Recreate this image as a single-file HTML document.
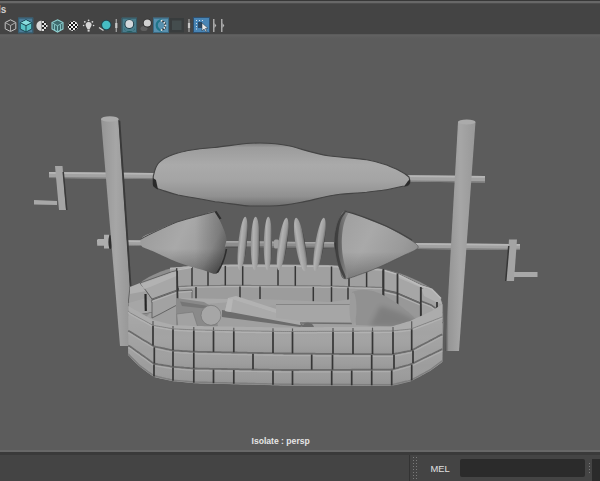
<!DOCTYPE html>
<html><head><meta charset="utf-8">
<style>
html,body{margin:0;padding:0;width:600px;height:481px;overflow:hidden;background:#5c5c5c;font-family:"Liberation Sans",sans-serif;}
#top{position:absolute;left:0;top:0;width:600px;height:34px;background:#444;}
#top .l1{position:absolute;left:0;top:0;width:600px;height:1px;background:#383838;}
#top .l2{position:absolute;left:0;top:1px;width:600px;height:2px;background:#686868;}
#top .l3{position:absolute;left:0;top:3px;width:600px;height:1px;background:#4e4e4e;}
#vp{position:absolute;left:0;top:34px;width:600px;height:416px;background:linear-gradient(#545454 0px,#626262 1px,#5e5e5e 3px,#5c5c5c 5px);}
#bot{position:absolute;left:0;top:450px;width:600px;height:31px;background:#444;}
#bot .l1{position:absolute;left:0;top:0;width:600px;height:2px;background:#686868;}
#bot .l2{position:absolute;left:0;top:2px;width:600px;height:3px;background:#3a3a3a;}
.txt{position:absolute;color:#e6e6e6;white-space:nowrap;}
</style></head><body>
<div id="top"><div class="l1"></div><div class="l2"></div><div class="l3"></div>
<svg width="240" height="34" viewBox="0 0 240 34" style="position:absolute;left:0;top:0">
<!-- icon1 wire cube -->
<g fill="none" stroke="#c4c4c4" stroke-width="1">
<path d="M10.5,19.8 L15.8,22.5 L15.8,28.8 L10.5,31.5 L5.2,28.8 L5.2,22.5 Z"/>
<path d="M10.5,25.5 L10.5,31 M10.5,25.5 L6,23 M10.5,25.5 L15,23" stroke="#aaaaaa"/>
</g>
<!-- icon2 active -->
<rect x="18.2" y="17.6" width="15" height="15.6" fill="#4b7c98"/>
<rect x="18.7" y="18.1" width="14" height="14.6" fill="none" stroke="#34596c" stroke-width="1"/>
<path d="M26,19.7 L31.8,22.7 L31.8,29 L26,32 L20.2,29 L20.2,22.7 Z" fill="#5ac3c6" stroke="#1b4652" stroke-width="1"/>
<path d="M20.5,22.9 L26,25.6 L31.5,22.9 L26,20.2 Z" fill="#8adede"/>
<path d="M26,25.6 L26,31.8 M26,25.6 L20.5,22.9 M26,25.6 L31.5,22.9" stroke="#1b4652" stroke-width="1" fill="none"/>
<!-- icon3 half checker sphere -->
<circle cx="41.6" cy="25.8" r="5.3" fill="#222"/>
<path d="M41.6,20.5 A5.3,5.3 0 0 0 41.6,31.1 Z" fill="#d8d8d8"/>
<g fill="#e0e0e0"><rect x="42" y="21" width="2" height="2"/><rect x="44" y="23" width="2" height="2"/><rect x="42" y="25" width="2" height="2"/><rect x="44" y="27" width="2" height="2"/><rect x="42" y="29" width="2" height="2"/><rect x="46" y="25" width="1.5" height="2"/></g>
<!-- icon4 teal wire cube -->
<path d="M57.5,19.8 L63,22.6 L63,29 L57.5,32 L52,29 L52,22.6 Z" fill="#3d6b6e" stroke="#90d2d2" stroke-width="1.1"/>
<path d="M57.5,25.8 L57.5,31.5 M57.5,25.8 L52.5,23 M57.5,25.8 L62.5,23 M54.5,24.5 L54.5,30 M60.5,24.5 L60.5,30" stroke="#8ccccc" stroke-width="0.9" fill="none"/>
<!-- icon5 checker circle -->
<clipPath id="cc5"><circle cx="73" cy="26" r="5.1"/></clipPath>
<g clip-path="url(#cc5)"><rect x="67" y="20" width="12" height="12" fill="#eee"/>
<g fill="#111"><rect x="67" y="20" width="2" height="2"/><rect x="71" y="20" width="2" height="2"/><rect x="75" y="20" width="2" height="2"/><rect x="69" y="22" width="2" height="2"/><rect x="73" y="22" width="2" height="2"/><rect x="77" y="22" width="2" height="2"/><rect x="67" y="24" width="2" height="2"/><rect x="71" y="24" width="2" height="2"/><rect x="75" y="24" width="2" height="2"/><rect x="69" y="26" width="2" height="2"/><rect x="73" y="26" width="2" height="2"/><rect x="77" y="26" width="2" height="2"/><rect x="67" y="28" width="2" height="2"/><rect x="71" y="28" width="2" height="2"/><rect x="75" y="28" width="2" height="2"/><rect x="69" y="30" width="2" height="2"/><rect x="73" y="30" width="2" height="2"/><rect x="77" y="30" width="2" height="2"/></g></g>
<!-- icon6 bulb -->
<g fill="#d6d6d6">
<path d="M88.6,22 C91,22 92,24 91.5,25.5 C91,27 90,28 89.6,29.5 L87.6,29.5 C87.2,28 86,27 85.7,25.5 C85.3,24 86.3,22 88.6,22 Z"/>
<rect x="87.6" y="30" width="2" height="1.6"/>
<circle cx="88.6" cy="20.3" r="0.9"/><circle cx="84.8" cy="21.8" r="0.9"/><circle cx="92.4" cy="21.8" r="0.9"/><circle cx="83.6" cy="25.5" r="0.8"/><circle cx="93.6" cy="25.5" r="0.8"/>
</g>
<!-- icon7 teal sphere -->
<circle cx="106.3" cy="25" r="5.2" fill="#1d4550"/>
<circle cx="106.3" cy="25" r="4.2" fill="#46bcc4"/>
<path d="M99,27.5 L103.5,30.5" stroke="#d0d0d0" stroke-width="1.4"/>
<!-- separator -->
<rect x="115.6" y="19" width="1.4" height="13" fill="#9a9a9a"/>
<rect x="115.2" y="23" width="2.2" height="5" fill="#c8c8c8"/>
<!-- icon9 active -->
<rect x="121.7" y="17.7" width="15.3" height="15.3" fill="#4a7d8c"/>
<rect x="122.2" y="18.2" width="14.3" height="14.3" fill="none" stroke="#355a66" stroke-width="1"/>
<path d="M124,28 A5.5,4 0 0 0 135,28 L133,31 L126,31 Z" fill="#1e5c5e"/>
<circle cx="129.3" cy="24.2" r="4.8" fill="#1f3a44"/>
<circle cx="129.3" cy="24" r="3.9" fill="#d4d8dc"/>
<!-- icon10 sphere with shadow -->
<ellipse cx="144" cy="28.5" rx="3.5" ry="2.6" fill="#5e5e5e"/>
<circle cx="147.3" cy="23.2" r="4.4" fill="#2c2c2c"/>
<circle cx="147.3" cy="23" r="3.6" fill="#d0d0d0"/>
<!-- icon11 active -->
<rect x="153" y="17.7" width="16" height="15.3" fill="#5890ae"/>
<rect x="153.5" y="18.2" width="15" height="14.3" fill="none" stroke="#3a6a84" stroke-width="1"/>
<path d="M162,20 A5.3,5.3 0 0 0 162,30.6" fill="none" stroke="#1f7488" stroke-width="2.2"/>
<path d="M161.5,20.6 L165,23 L165,28 L161.5,30.2" fill="none" stroke="#1a2a34" stroke-width="1.6"/>
<g fill="#e6e6e6"><circle cx="161.6" cy="20.8" r="1"/><circle cx="164.3" cy="22.7" r="1"/><circle cx="165.3" cy="25.4" r="1"/><circle cx="164.3" cy="28.1" r="1"/><circle cx="161.6" cy="30" r="1"/></g>
<!-- icon12 dark square -->
<rect x="169.5" y="18" width="14.5" height="14.5" fill="#383c3d"/>
<rect x="172" y="20.5" width="9.5" height="9.5" fill="#444d4e"/>
<!-- separator -->
<rect x="188.3" y="19" width="1.4" height="13" fill="#9a9a9a"/>
<rect x="187.9" y="23" width="2.2" height="5" fill="#c8c8c8"/>
<!-- icon14 active -->
<rect x="193" y="17" width="17" height="16" fill="#4884b4"/>
<rect x="193.5" y="17.5" width="16" height="15" fill="none" stroke="#2e5070" stroke-width="1"/>
<g fill="#d6e0ea"><rect x="196" y="20" width="1" height="1"/><rect x="199" y="20" width="1" height="1"/><rect x="202" y="20" width="1" height="1"/><rect x="196" y="23" width="1" height="1"/><rect x="196" y="26" width="1" height="1"/><rect x="196" y="28.5" width="1" height="1"/></g>
<rect x="198" y="22" width="4" height="6" fill="#2a4660"/>
<path d="M202,23 L202,31 L204,29 L206,32 L207,31.4 L205.3,28.5 L208,28.3 Z" fill="#e8e8e8" stroke="#20303c" stroke-width="0.5"/>
<!-- arrows -->
<rect x="213" y="19" width="1.5" height="13" fill="#a8a8a8"/>
<path d="M214.5,23 L216.3,25.5 L214.5,28 Z" fill="#b4b4b4"/>
<rect x="221" y="19" width="1.5" height="13" fill="#a8a8a8"/>
<path d="M222.5,23 L224.3,25.5 L222.5,28 Z" fill="#b4b4b4"/>
</svg>

<div class="txt" style="left:-2px;top:3.5px;font-size:10px;font-weight:bold;color:#d0d0d0;">ls</div>
</div>
<div id="vp"></div>
<svg width="600" height="481" viewBox="0 0 600 481" style="position:absolute;left:0;top:0;filter:blur(0.3px)">
<defs>
<linearGradient id="gSaus" gradientUnits="userSpaceOnUse" x1="0" y1="143" x2="0" y2="206">
<stop offset="0" stop-color="#7c7c7c"/><stop offset="0.07" stop-color="#9c9c9c"/><stop offset="0.35" stop-color="#aaaaaa"/><stop offset="0.6" stop-color="#a4a4a4"/><stop offset="0.85" stop-color="#909090"/><stop offset="1" stop-color="#6e6e6e"/>
</linearGradient>
<linearGradient id="gPostL" x1="0" y1="0" x2="1" y2="0">
<stop offset="0" stop-color="#959595"/><stop offset="0.45" stop-color="#a6a6a6"/><stop offset="0.85" stop-color="#989898"/><stop offset="1" stop-color="#6a6a6a"/>
</linearGradient>
<linearGradient id="gPostR" x1="0" y1="0" x2="1" y2="0">
<stop offset="0" stop-color="#4a4a4a"/><stop offset="0.12" stop-color="#969696"/><stop offset="0.5" stop-color="#a6a6a6"/><stop offset="1" stop-color="#989898"/>
</linearGradient>
<linearGradient id="gConeL" gradientUnits="userSpaceOnUse" x1="141" y1="220" x2="226" y2="262">
<stop offset="0" stop-color="#9a9a9a"/><stop offset="0.45" stop-color="#a9a9a9"/><stop offset="0.8" stop-color="#9a9a9a"/><stop offset="1" stop-color="#747474"/>
</linearGradient>
<linearGradient id="gConeR" gradientUnits="userSpaceOnUse" x1="340" y1="225" x2="418" y2="265">
<stop offset="0" stop-color="#a0a0a0"/><stop offset="0.35" stop-color="#a9a9a9"/><stop offset="0.75" stop-color="#9a9a9a"/><stop offset="1" stop-color="#8a8a8a"/>
</linearGradient>
<linearGradient id="gShadeV" x1="0" y1="0" x2="0" y2="1">
<stop offset="0" stop-color="#000" stop-opacity="0"/><stop offset="0.6" stop-color="#000" stop-opacity="0"/><stop offset="1" stop-color="#000" stop-opacity="0.28"/>
</linearGradient>
<linearGradient id="gDisc" x1="0" y1="0" x2="1" y2="0">
<stop offset="0" stop-color="#909090"/><stop offset="0.3" stop-color="#b2b2b2"/><stop offset="0.7" stop-color="#9c9c9c"/><stop offset="0.88" stop-color="#7a7a7a"/><stop offset="1" stop-color="#3c3c3c"/>
</linearGradient>
<linearGradient id="gShadeR" gradientUnits="userSpaceOnUse" x1="195" y1="0" x2="226" y2="0"><stop offset="0" stop-color="#000" stop-opacity="0"/><stop offset="1" stop-color="#000" stop-opacity="0.25"/></linearGradient>
<linearGradient id="gEndR" gradientUnits="userSpaceOnUse" x1="335" y1="0" x2="349" y2="0"><stop offset="0" stop-color="#505050"/><stop offset="1" stop-color="#8e8e8e"/></linearGradient>
<linearGradient id="gRow" x1="0" y1="0" x2="0" y2="1"><stop offset="0" stop-color="#fff" stop-opacity="0.07"/><stop offset="0.5" stop-color="#fff" stop-opacity="0"/><stop offset="1" stop-color="#000" stop-opacity="0.07"/></linearGradient>
<filter id="blur1" x="-20%" y="-20%" width="140%" height="140%"><feGaussianBlur stdDeviation="1.2"/></filter>
<filter id="blur2" x="-20%" y="-20%" width="140%" height="140%"><feGaussianBlur stdDeviation="2.5"/></filter>
</defs>

<!-- rods -->
<polygon points="49,172 485,176 485,182.5 49,178" fill="#a2a2a2"/>
<polygon points="49,172 485,176 485,177.8 49,173.8" fill="#b6b6b6"/>
<polygon points="49,177 485,181.3 485,182.5 49,178" fill="#7e7e7e"/>
<polygon points="97,240 520,244 520,250 97,245.5" fill="#a2a2a2"/>
<polygon points="97,240 520,244 520,245.8 97,241.8" fill="#b6b6b6"/>
<polygon points="97,244.5 520,248.8 520,250 97,245.5" fill="#7e7e7e"/>
<!-- left nut -->
<polygon points="97.5,239 104,239 104,234.8 109,234.8 109,248.5 104,248.5 104,245.5 97.5,245.5" fill="#adadad"/>
<ellipse cx="110.3" cy="242" rx="1.9" ry="7" fill="#2e2e2e"/>

<!-- posts -->
<polygon points="101,119 118.5,119 134,346 120,346" fill="url(#gPostL)"/>
<polygon points="118.3,120 120.3,121 135.5,346 133.8,346" fill="#3a3a3a"/>
<ellipse cx="109.8" cy="119" rx="8.8" ry="2.8" fill="#ababab"/>
<polygon points="458,122 475.5,122 459,351 445,351" fill="url(#gPostR)"/>
<ellipse cx="466.7" cy="122" rx="8.8" ry="2.6" fill="#ababab"/>

<!-- cranks -->
<polygon points="55,166 62.5,166 66,210 59,210" fill="#a4a4a4"/>
<polygon points="62.5,172 64,172 67.5,210 66,210" fill="#3a3a3a"/>
<polygon points="34,200 57,201 57,205 34,204.5" fill="#a8a8a8"/>
<polygon points="509,239.5 517,239.5 514,281 506,281" fill="#a4a4a4"/>
<polygon points="508,246 509.5,246 506.5,281 505,281" fill="#363636"/>
<polygon points="514,272 537.5,272 537.5,277 514,277" fill="#a8a8a8"/>

<!-- sausage -->
<path id="saus" d="M153,180 C153,176 155,166 160,161.7 C164,158 167,157 170,155.8 C176,153 181,152 186.7,150.8 C200,148.5 208,148 215,147.5 C228,146 240,144 250,143.3 C265,142.5 278,143.5 290,146 C302,149 315,154 330,156 L340,157 C350,158 358,158.5 366.7,159.7 C375,161 381,163 386.7,165 C393,167.5 397,169 400,171 C404,173 407,175 409,177 L410,181 C410,184 409,185.5 406,186 L402.7,186.3 C396,187.5 392,189 386.7,189.7 C380,190.5 373,191.5 366.7,192.3 C360,193 350,193.5 340,194.3 C325,196 310,201 300,202.5 C288,205 280,206 270,206 L250,206 C240,205.5 228,203 215,201.7 C208,200.5 200,199 195,198 C188,197 183,196 178,195 C170,193 165,191 161.7,190 C157,189 154,187 153,184 Z" fill="url(#gSaus)" stroke="#444" stroke-width="1.1"/>
<path d="M153,178 L153,186 C155,188 157,189 158,189.5 L156,180 Z" fill="#2a2a2a"/>
<path d="M410,179 L410,183 C409,185.5 407,186 404,186.5 L408,181 Z" fill="#2a2a2a"/>

<g id="ring">
<path d="M128.2,303 C129,296 131,291 131,291 C140,281 155,272 175,267.6 C200,265 220,264 260,264 L329,265 C350,266 370,267 383,269 C395,271 415,278 431.7,288.4 C437,292 441,297 443,305 L443.5,321 L442.3,362 C438,366 428,372 415.7,378 C405,382 390,386 370,386 L285,385.5 L200,383.5 C180,382 165,380 154,377 C145,371 136,364 128.2,355 Z" fill="#8e8e8e"/>
<polygon points="145,318 165,298 200,294 330,300 383,298 410,305 430,322 420,332 160,332" fill="#a0a0a0"/>
<polygon points="170.0,267.8 172.0,267.6 174.0,267.4 176.0,267.3 178.0,267.1 180.0,266.9 182.0,266.7 184.0,266.5 186.0,266.4 188.0,266.2 190.0,266.0 192.0,265.9 194.0,265.9 196.0,265.8 198.0,265.8 200.0,265.7 202.0,265.6 204.0,265.6 206.0,265.5 208.0,265.5 210.0,265.4 212.0,265.3 214.0,265.3 216.0,265.2 218.0,265.2 220.0,265.1 222.0,265.0 224.0,265.0 226.0,264.9 228.0,264.9 230.0,264.8 232.0,264.8 234.0,264.8 236.0,264.8 238.0,264.8 240.0,264.9 242.0,264.9 244.0,264.9 246.0,264.9 248.0,264.9 250.0,264.9 252.0,264.9 254.0,264.9 256.0,264.9 258.0,264.9 260.0,265.0 262.0,265.0 264.0,265.0 266.0,265.0 268.0,265.0 270.0,265.0 272.0,265.0 274.0,265.0 276.0,265.0 278.0,265.0 280.0,265.1 282.0,265.1 284.0,265.1 286.0,265.1 288.0,265.1 290.0,265.1 292.0,265.1 294.0,265.1 296.0,265.1 298.0,265.1 300.0,265.2 302.0,265.2 304.0,265.2 306.0,265.2 308.0,265.2 310.0,265.2 312.0,265.2 314.0,265.2 316.0,265.2 318.0,265.2 320.0,265.3 322.0,265.3 324.0,265.3 326.0,265.3 328.0,265.3 330.0,265.4 332.0,265.5 334.0,265.7 336.0,265.8 338.0,265.9 340.0,266.1 342.0,266.2 344.0,266.4 346.0,266.5 348.0,266.7 350.0,266.8 352.0,267.0 354.0,267.1 356.0,267.2 358.0,267.4 360.0,267.5 362.0,267.7 364.0,267.8 366.0,268.0 368.0,268.1 370.0,268.3 372.0,268.4 374.0,268.6 376.0,268.7 378.0,268.8 380.0,269.0 382.0,269.1 383.0,269.2 383.0,287.5 382.0,287.5 380.0,287.4 378.0,287.4 376.0,287.3 374.0,287.2 372.0,287.2 370.0,287.1 368.0,287.1 366.0,287.0 364.0,287.0 362.0,286.9 360.0,286.9 358.0,286.8 356.0,286.8 354.0,286.7 352.0,286.6 350.0,286.6 348.0,286.5 346.0,286.5 344.0,286.4 342.0,286.4 340.0,286.3 338.0,286.2 336.0,286.2 334.0,286.1 332.0,286.1 330.0,286.0 328.0,286.0 326.0,286.0 324.0,286.0 322.0,286.0 320.0,285.9 318.0,285.9 316.0,285.9 314.0,285.9 312.0,285.9 310.0,285.9 308.0,285.9 306.0,285.8 304.0,285.8 302.0,285.8 300.0,285.8 298.0,285.8 296.0,285.8 294.0,285.8 292.0,285.7 290.0,285.7 288.0,285.7 286.0,285.7 284.0,285.7 282.0,285.7 280.0,285.7 278.0,285.6 276.0,285.6 274.0,285.6 272.0,285.6 270.0,285.6 268.0,285.6 266.0,285.6 264.0,285.5 262.0,285.5 260.0,285.5 258.0,285.5 256.0,285.5 254.0,285.5 252.0,285.5 250.0,285.4 248.0,285.4 246.0,285.4 244.0,285.4 242.0,285.4 240.0,285.4 238.0,285.4 236.0,285.3 234.0,285.3 232.0,285.3 230.0,285.3 228.0,285.3 226.0,285.4 224.0,285.4 222.0,285.4 220.0,285.5 218.0,285.5 216.0,285.5 214.0,285.6 212.0,285.6 210.0,285.6 208.0,285.7 206.0,285.7 204.0,285.8 202.0,285.8 200.0,285.8 198.0,285.9 196.0,285.9 194.0,285.9 192.0,286.0 190.0,286.0 188.0,286.1 186.0,286.2 184.0,286.3 182.0,286.4 180.0,286.5 178.0,286.6 176.0,286.7 174.0,286.8 172.0,286.9 170.0,287.0" fill="#a0a0a0"/>
<polygon points="170.0,287.0 172.0,286.9 174.0,286.8 176.0,286.7 178.0,286.6 180.0,286.5 182.0,286.4 184.0,286.3 186.0,286.2 188.0,286.1 190.0,286.0 192.0,286.0 194.0,285.9 196.0,285.9 198.0,285.9 200.0,285.8 202.0,285.8 204.0,285.8 206.0,285.7 208.0,285.7 210.0,285.6 212.0,285.6 214.0,285.6 216.0,285.5 218.0,285.5 220.0,285.5 222.0,285.4 224.0,285.4 226.0,285.4 228.0,285.3 230.0,285.3 232.0,285.3 234.0,285.3 236.0,285.3 238.0,285.4 240.0,285.4 242.0,285.4 244.0,285.4 246.0,285.4 248.0,285.4 250.0,285.4 252.0,285.5 254.0,285.5 256.0,285.5 258.0,285.5 260.0,285.5 262.0,285.5 264.0,285.5 266.0,285.6 268.0,285.6 270.0,285.6 272.0,285.6 274.0,285.6 276.0,285.6 278.0,285.6 280.0,285.7 282.0,285.7 284.0,285.7 286.0,285.7 288.0,285.7 290.0,285.7 292.0,285.7 294.0,285.8 296.0,285.8 298.0,285.8 300.0,285.8 302.0,285.8 304.0,285.8 306.0,285.8 308.0,285.9 310.0,285.9 312.0,285.9 314.0,285.9 316.0,285.9 318.0,285.9 320.0,285.9 322.0,286.0 324.0,286.0 326.0,286.0 328.0,286.0 330.0,286.0 332.0,286.1 334.0,286.1 336.0,286.2 338.0,286.2 340.0,286.3 342.0,286.4 344.0,286.4 346.0,286.5 348.0,286.5 350.0,286.6 352.0,286.6 354.0,286.7 356.0,286.8 358.0,286.8 360.0,286.9 362.0,286.9 364.0,287.0 366.0,287.0 368.0,287.1 370.0,287.1 372.0,287.2 374.0,287.2 376.0,287.3 378.0,287.4 380.0,287.4 382.0,287.5 383.0,287.5 383.0,303.0 382.0,303.0 380.0,302.9 378.0,302.9 376.0,302.9 374.0,302.8 372.0,302.8 370.0,302.8 368.0,302.7 366.0,302.7 364.0,302.6 362.0,302.6 360.0,302.6 358.0,302.5 356.0,302.5 354.0,302.5 352.0,302.4 350.0,302.4 348.0,302.4 346.0,302.3 344.0,302.3 342.0,302.2 340.0,302.2 338.0,302.2 336.0,302.1 334.0,302.1 332.0,302.1 330.0,302.0 328.0,302.0 326.0,301.9 324.0,301.9 322.0,301.8 320.0,301.8 318.0,301.7 316.0,301.7 314.0,301.6 312.0,301.6 310.0,301.5 308.0,301.5 306.0,301.4 304.0,301.4 302.0,301.3 300.0,301.3 298.0,301.2 296.0,301.2 294.0,301.1 292.0,301.1 290.0,301.0 288.0,301.0 286.0,300.9 284.0,300.9 282.0,300.8 280.0,300.8 278.0,300.7 276.0,300.7 274.0,300.6 272.0,300.6 270.0,300.5 268.0,300.5 266.0,300.4 264.0,300.4 262.0,300.3 260.0,300.3 258.0,300.2 256.0,300.2 254.0,300.1 252.0,300.1 250.0,300.0 248.0,300.0 246.0,299.9 244.0,299.9 242.0,299.8 240.0,299.8 238.0,299.7 236.0,299.7 234.0,299.6 232.0,299.6 230.0,299.5 228.0,299.5 226.0,299.4 224.0,299.4 222.0,299.4 220.0,299.4 218.0,299.4 216.0,299.3 214.0,299.3 212.0,299.3 210.0,299.2 208.0,299.2 206.0,299.2 204.0,299.2 202.0,299.1 200.0,299.1 198.0,299.1 196.0,299.1 194.0,299.1 192.0,299.0 190.0,299.0 188.0,299.1 186.0,299.2 184.0,299.3 182.0,299.4 180.0,299.5 178.0,299.6 176.0,299.7 174.0,299.8 172.0,299.9 170.0,300.0" fill="#9c9c9c"/>
<path d="M170.0,268.8 L172.0,268.6 L174.0,268.4 L176.0,268.3 L178.0,268.1 L180.0,267.9 L182.0,267.7 L184.0,267.5 L186.0,267.4 L188.0,267.2 L190.0,267.0 L192.0,266.9 L194.0,266.9 L196.0,266.8 L198.0,266.8 L200.0,266.7 L202.0,266.6 L204.0,266.6 L206.0,266.5 L208.0,266.5 L210.0,266.4 L212.0,266.3 L214.0,266.3 L216.0,266.2 L218.0,266.2 L220.0,266.1 L222.0,266.0 L224.0,266.0 L226.0,265.9 L228.0,265.9 L230.0,265.8 L232.0,265.8 L234.0,265.8 L236.0,265.8 L238.0,265.8 L240.0,265.9 L242.0,265.9 L244.0,265.9 L246.0,265.9 L248.0,265.9 L250.0,265.9 L252.0,265.9 L254.0,265.9 L256.0,265.9 L258.0,265.9 L260.0,266.0 L262.0,266.0 L264.0,266.0 L266.0,266.0 L268.0,266.0 L270.0,266.0 L272.0,266.0 L274.0,266.0 L276.0,266.0 L278.0,266.0 L280.0,266.1 L282.0,266.1 L284.0,266.1 L286.0,266.1 L288.0,266.1 L290.0,266.1 L292.0,266.1 L294.0,266.1 L296.0,266.1 L298.0,266.1 L300.0,266.2 L302.0,266.2 L304.0,266.2 L306.0,266.2 L308.0,266.2 L310.0,266.2 L312.0,266.2 L314.0,266.2 L316.0,266.2 L318.0,266.2 L320.0,266.3 L322.0,266.3 L324.0,266.3 L326.0,266.3 L328.0,266.3 L330.0,266.4 L332.0,266.5 L334.0,266.7 L336.0,266.8 L338.0,266.9 L340.0,267.1 L342.0,267.2 L344.0,267.4 L346.0,267.5 L348.0,267.7 L350.0,267.8 L352.0,268.0 L354.0,268.1 L356.0,268.2 L358.0,268.4 L360.0,268.5 L362.0,268.7 L364.0,268.8 L366.0,269.0 L368.0,269.1 L370.0,269.3 L372.0,269.4 L374.0,269.6 L376.0,269.7 L378.0,269.8 L380.0,270.0 L382.0,270.1 L383.0,270.2" fill="none" stroke="#b4b4b4" stroke-width="1.5"/>
<path d="M170.0,287.0 L172.0,286.9 L174.0,286.8 L176.0,286.7 L178.0,286.6 L180.0,286.5 L182.0,286.4 L184.0,286.3 L186.0,286.2 L188.0,286.1 L190.0,286.0 L192.0,286.0 L194.0,285.9 L196.0,285.9 L198.0,285.9 L200.0,285.8 L202.0,285.8 L204.0,285.8 L206.0,285.7 L208.0,285.7 L210.0,285.6 L212.0,285.6 L214.0,285.6 L216.0,285.5 L218.0,285.5 L220.0,285.5 L222.0,285.4 L224.0,285.4 L226.0,285.4 L228.0,285.3 L230.0,285.3 L232.0,285.3 L234.0,285.3 L236.0,285.3 L238.0,285.4 L240.0,285.4 L242.0,285.4 L244.0,285.4 L246.0,285.4 L248.0,285.4 L250.0,285.4 L252.0,285.5 L254.0,285.5 L256.0,285.5 L258.0,285.5 L260.0,285.5 L262.0,285.5 L264.0,285.5 L266.0,285.6 L268.0,285.6 L270.0,285.6 L272.0,285.6 L274.0,285.6 L276.0,285.6 L278.0,285.6 L280.0,285.7 L282.0,285.7 L284.0,285.7 L286.0,285.7 L288.0,285.7 L290.0,285.7 L292.0,285.7 L294.0,285.8 L296.0,285.8 L298.0,285.8 L300.0,285.8 L302.0,285.8 L304.0,285.8 L306.0,285.8 L308.0,285.9 L310.0,285.9 L312.0,285.9 L314.0,285.9 L316.0,285.9 L318.0,285.9 L320.0,285.9 L322.0,286.0 L324.0,286.0 L326.0,286.0 L328.0,286.0 L330.0,286.0 L332.0,286.1 L334.0,286.1 L336.0,286.2 L338.0,286.2 L340.0,286.3 L342.0,286.4 L344.0,286.4 L346.0,286.5 L348.0,286.5 L350.0,286.6 L352.0,286.6 L354.0,286.7 L356.0,286.8 L358.0,286.8 L360.0,286.9 L362.0,286.9 L364.0,287.0 L366.0,287.0 L368.0,287.1 L370.0,287.1 L372.0,287.2 L374.0,287.2 L376.0,287.3 L378.0,287.4 L380.0,287.4 L382.0,287.5 L383.0,287.5" fill="none" stroke="#7a7a7a" stroke-width="1.2"/>
<path d="M170.0,288.3 L172.0,288.2 L174.0,288.1 L176.0,288.0 L178.0,287.9 L180.0,287.8 L182.0,287.7 L184.0,287.6 L186.0,287.5 L188.0,287.4 L190.0,287.3 L192.0,287.3 L194.0,287.2 L196.0,287.2 L198.0,287.2 L200.0,287.1 L202.0,287.1 L204.0,287.1 L206.0,287.0 L208.0,287.0 L210.0,286.9 L212.0,286.9 L214.0,286.9 L216.0,286.8 L218.0,286.8 L220.0,286.8 L222.0,286.7 L224.0,286.7 L226.0,286.7 L228.0,286.6 L230.0,286.6 L232.0,286.6 L234.0,286.6 L236.0,286.6 L238.0,286.7 L240.0,286.7 L242.0,286.7 L244.0,286.7 L246.0,286.7 L248.0,286.7 L250.0,286.7 L252.0,286.8 L254.0,286.8 L256.0,286.8 L258.0,286.8 L260.0,286.8 L262.0,286.8 L264.0,286.8 L266.0,286.9 L268.0,286.9 L270.0,286.9 L272.0,286.9 L274.0,286.9 L276.0,286.9 L278.0,286.9 L280.0,287.0 L282.0,287.0 L284.0,287.0 L286.0,287.0 L288.0,287.0 L290.0,287.0 L292.0,287.0 L294.0,287.1 L296.0,287.1 L298.0,287.1 L300.0,287.1 L302.0,287.1 L304.0,287.1 L306.0,287.1 L308.0,287.2 L310.0,287.2 L312.0,287.2 L314.0,287.2 L316.0,287.2 L318.0,287.2 L320.0,287.2 L322.0,287.3 L324.0,287.3 L326.0,287.3 L328.0,287.3 L330.0,287.3 L332.0,287.4 L334.0,287.4 L336.0,287.5 L338.0,287.6 L340.0,287.6 L342.0,287.7 L344.0,287.7 L346.0,287.8 L348.0,287.8 L350.0,287.9 L352.0,287.9 L354.0,288.0 L356.0,288.1 L358.0,288.1 L360.0,288.2 L362.0,288.2 L364.0,288.3 L366.0,288.3 L368.0,288.4 L370.0,288.4 L372.0,288.5 L374.0,288.6 L376.0,288.6 L378.0,288.7 L380.0,288.7 L382.0,288.8 L383.0,288.8" fill="none" stroke="#b0b0b0" stroke-width="1.2"/>
<line x1="176.7" y1="268.2" x2="176.7" y2="286.7" stroke="#363636" stroke-width="1.5"/>
<line x1="192" y1="266.9" x2="192" y2="286.0" stroke="#363636" stroke-width="1.5"/>
<line x1="208" y1="266.5" x2="208" y2="285.7" stroke="#363636" stroke-width="1.5"/>
<line x1="225.3" y1="265.9" x2="225.3" y2="285.4" stroke="#363636" stroke-width="1.5"/>
<line x1="242.7" y1="265.9" x2="242.7" y2="285.4" stroke="#363636" stroke-width="1.5"/>
<line x1="278" y1="266.0" x2="278" y2="285.6" stroke="#363636" stroke-width="1.5"/>
<line x1="295.3" y1="266.1" x2="295.3" y2="285.8" stroke="#363636" stroke-width="1.5"/>
<line x1="331.5" y1="266.5" x2="331.5" y2="286.1" stroke="#363636" stroke-width="1.5"/>
<line x1="349" y1="267.7" x2="349" y2="286.6" stroke="#363636" stroke-width="1.5"/>
<line x1="366.6" y1="269.0" x2="366.6" y2="287.0" stroke="#363636" stroke-width="1.5"/>
<line x1="383" y1="270.2" x2="383" y2="287.5" stroke="#363636" stroke-width="1.5"/>
<line x1="178" y1="287.6" x2="178" y2="299.6" stroke="#363636" stroke-width="1.5"/>
<line x1="196" y1="286.9" x2="196" y2="299.1" stroke="#363636" stroke-width="1.5"/>
<line x1="240" y1="286.4" x2="240" y2="299.8" stroke="#363636" stroke-width="1.5"/>
<line x1="260" y1="286.5" x2="260" y2="300.3" stroke="#363636" stroke-width="1.5"/>
<line x1="313.3" y1="286.9" x2="313.3" y2="301.6" stroke="#363636" stroke-width="1.5"/>
<line x1="331.5" y1="287.1" x2="331.5" y2="302.0" stroke="#363636" stroke-width="1.5"/>
<line x1="348" y1="287.5" x2="348" y2="302.4" stroke="#363636" stroke-width="1.5"/>
<line x1="383" y1="288.5" x2="383" y2="303.0" stroke="#363636" stroke-width="1.5"/>
<polygon points="128.5,300 130,287 140,283 147,292 152,299 152,312 129,316" fill="#a0a0a0" stroke="#5e5e5e" stroke-width="0.9" stroke-linejoin="round"/>
<polygon points="130,287 140,283 146,291 130,294" fill="#b0b0b0"/>
<polygon points="128.5,303 146,298 152,303 152,312 129,316" fill="#a6a6a6"/>
<polygon points="152,300 177,291 192,290 192,299 175,306 160,314 152,318" fill="#a2a2a2" stroke="#5e5e5e" stroke-width="0.9" stroke-linejoin="round"/>
<polyline points="152,301.5 177,292.5 192,291.5" fill="none" stroke="#b4b4b4" stroke-width="1.2"/>
<polygon points="140,283 172,271.7 177,270.5 177,290 152,299 147,292" fill="#a7a7a7" stroke="#5e5e5e" stroke-width="0.9" stroke-linejoin="round"/>
<polygon points="141,284 172,272.5 176.5,271.5 176.5,276 150,287 144,289" fill="#b2b2b2"/>
<line x1="145.5" y1="294" x2="145.8" y2="311" stroke="#262626" stroke-width="2.2"/>
<line x1="177" y1="269" x2="177.5" y2="299" stroke="#363636" stroke-width="1.8"/>
<polygon points="383,289.5 397.5,293 420.8,303.5 422,320 400,318 383,304" fill="#989898" stroke="#5e5e5e" stroke-width="0.9" stroke-linejoin="round"/>
<polygon points="420.8,288 431.7,288.4 441,297.8 443,305 443,322 436,330 422,322 420.8,303" fill="#a2a2a2" stroke="#5e5e5e" stroke-width="0.9" stroke-linejoin="round"/>
<polygon points="421.5,289 431.7,289 440,298 442,304 438,303 424,296" fill="#b0b0b0"/>
<polygon points="383,269.2 397.5,273.5 397.5,292.5 383,289.5" fill="#a3a3a3" stroke="#5e5e5e" stroke-width="0.9" stroke-linejoin="round"/>
<polygon points="397.5,273.5 420.8,285 431.7,288.4 420.8,288 420.8,303 397.5,293" fill="#a6a6a6" stroke="#5e5e5e" stroke-width="0.9" stroke-linejoin="round"/>
<polygon points="397.5,273.5 420.8,285 431.7,288.4 424,289 399,278" fill="#b2b2b2"/>
<polyline points="383,290 397.5,293.5 420.8,303.5" fill="none" stroke="#666" stroke-width="1.8"/>
<polyline points="383,291.8 397.5,295.3 420.8,305.3" fill="none" stroke="#b2b2b2" stroke-width="1.2"/>
<polyline points="420.8,301 431,305 442,313" fill="none" stroke="#666" stroke-width="1.8"/>
<polyline points="420.8,302.8 431,306.8 442,314.8" fill="none" stroke="#b2b2b2" stroke-width="1.2"/>
<polyline points="177,270 192,267.5" fill="none" stroke="#bbb" stroke-width="1.2"/>
<polyline points="383,270 397.5,274.3 420.8,286 431.7,289.2 441,298.5" fill="none" stroke="#bcbcbc" stroke-width="1.4"/>
<line x1="383.5" y1="269" x2="383.5" y2="304" stroke="#363636" stroke-width="1.8"/>
<line x1="397.5" y1="273.5" x2="397.5" y2="316" stroke="#363636" stroke-width="1.8"/>
<line x1="420.8" y1="287" x2="420.8" y2="322" stroke="#363636" stroke-width="1.8"/>
<line x1="437" y1="302" x2="437" y2="314" stroke="#363636" stroke-width="1.8"/>
<polygon points="232,302 260,299 330,302 352,299 352,305 276,305 240,310" fill="#a3a3a3"/>
<polygon points="181,298 227,299 232,302 205,304 181,303" fill="#a9a9a9"/>
<polygon points="176,298 204,302 214,308 218,326 200,331 176,327" fill="#8a8a8a"/>
<polygon points="180,301.5 206.7,305.8 209,309 182,306" fill="#767676"/>
<polygon points="176.7,314 193,312 198,328 178,330" fill="#a2a2a2" stroke="#7a7a7a" stroke-width="0.7"/>
<polygon points="222,310 300,323 305,326 300,327 222,317" fill="#6c6c6c"/>
<polygon points="228,298 304,322 300,325 225,311" fill="#aaaaaa"/>
<polygon points="228,298 236,296 310,320 304,322" fill="#b2b2b2"/>
<polygon points="225,311 228,298 233,299 231,312" fill="#b6b6b6"/>
<polygon points="276,304 352,304 353,322 310,322 276,318" fill="#a6a6a6"/>
<line x1="276" y1="304.5" x2="352" y2="304.5" stroke="#858585" stroke-width="1"/>
<line x1="300" y1="323" x2="352" y2="323.5" stroke="#6e6e6e" stroke-width="1.5"/>
<path d="M352,292 C362,288 372,289 385,296 C398,303 410,312 420,324 L405,327 L356,325 Z" fill="#919191"/>
<path d="M380,306 C395,310 410,316 420,324 L405,327 L370,326 Z" fill="#000" opacity="0.12" filter="url(#blur2)"/>
<ellipse cx="353" cy="308.5" rx="3.5" ry="16" fill="#9c9c9c"/>
<path d="M302,327 C303,322 312,321 314,327 Z" fill="#6a6a6a"/>
<circle cx="211" cy="315.3" r="10" fill="#a6a6a6" stroke="#7a7a7a" stroke-width="0.8"/>
<polygon points="128.2,306.0 130.2,307.1 132.2,308.3 134.2,309.4 136.2,310.5 138.2,311.6 140.2,312.8 142.2,313.9 144.2,315.0 146.2,316.2 148.2,317.3 150.2,318.4 152.2,319.5 154.2,320.3 156.2,320.8 158.2,321.3 160.2,321.8 162.2,322.3 164.2,322.8 166.2,323.3 168.2,323.8 170.2,324.3 172.2,324.8 174.2,325.1 176.2,325.2 178.2,325.2 180.2,325.3 182.2,325.4 184.2,325.5 186.2,325.6 188.2,325.7 190.2,325.8 192.2,325.9 194.2,326.0 196.2,326.0 198.2,326.1 200.2,326.1 202.2,326.1 204.2,326.2 206.2,326.2 208.2,326.2 210.2,326.3 212.2,326.3 214.2,326.3 216.2,326.4 218.2,326.4 220.2,326.4 222.2,326.5 224.2,326.5 226.2,326.5 228.2,326.6 230.2,326.6 232.2,326.6 234.2,326.7 236.2,326.7 238.2,326.7 240.2,326.8 242.2,326.8 244.2,326.8 246.2,326.9 248.2,326.9 250.2,326.9 252.2,327.0 254.2,327.0 256.2,327.0 258.2,327.1 260.2,327.1 262.2,327.1 264.2,327.2 266.2,327.2 268.2,327.2 270.2,327.3 272.2,327.3 274.2,327.3 276.2,327.4 278.2,327.4 280.2,327.4 282.2,327.5 284.2,327.5 286.2,327.5 288.2,327.5 290.2,327.5 292.2,327.4 294.2,327.4 296.2,327.4 298.2,327.4 300.2,327.4 302.2,327.3 304.2,327.3 306.2,327.3 308.2,327.3 310.2,327.3 312.2,327.2 314.2,327.2 316.2,327.2 318.2,327.2 320.2,327.2 322.2,327.2 324.2,327.1 326.2,327.1 328.2,327.1 330.2,327.1 332.2,327.1 334.2,327.0 336.2,327.0 338.2,327.0 340.2,327.0 342.2,327.0 344.2,326.9 346.2,326.9 348.2,326.9 350.2,326.9 352.2,326.9 354.2,326.9 356.2,326.8 358.2,326.8 360.2,326.8 362.2,326.8 364.2,326.8 366.2,326.7 368.2,326.7 370.2,326.7 372.2,326.7 374.2,326.7 376.2,326.6 378.2,326.6 380.2,326.6 382.2,326.6 384.2,326.6 386.2,326.6 388.2,326.5 390.2,326.5 392.2,326.3 394.2,325.7 396.2,325.1 398.2,324.5 400.2,323.9 402.2,323.3 404.2,322.7 406.2,322.1 408.2,321.5 410.2,320.9 412.2,320.0 414.2,319.1 416.2,318.1 418.2,317.2 420.2,316.3 422.2,315.4 424.2,314.5 426.2,313.5 428.2,312.6 430.2,311.7 432.2,310.7 434.2,309.3 436.2,308.0 438.2,306.7 440.2,305.4 442.2,304.1 442.3,304.0 442.3,317.0 442.2,317.0 440.2,317.8 438.2,318.6 436.2,319.3 434.2,320.1 432.2,320.9 430.2,321.6 428.2,322.4 426.2,323.2 424.2,323.9 422.2,324.7 420.2,325.5 418.2,326.2 416.2,327.0 414.2,327.8 412.2,328.5 410.2,329.1 408.2,329.3 406.2,329.5 404.2,329.7 402.2,329.9 400.2,330.1 398.2,330.3 396.2,330.5 394.2,330.7 392.2,330.9 390.2,331.0 388.2,331.0 386.2,331.0 384.2,331.0 382.2,331.0 380.2,331.1 378.2,331.1 376.2,331.1 374.2,331.1 372.2,331.1 370.2,331.1 368.2,331.1 366.2,331.1 364.2,331.1 362.2,331.1 360.2,331.1 358.2,331.2 356.2,331.2 354.2,331.2 352.2,331.2 350.2,331.2 348.2,331.2 346.2,331.2 344.2,331.2 342.2,331.2 340.2,331.2 338.2,331.3 336.2,331.3 334.2,331.3 332.2,331.3 330.2,331.3 328.2,331.3 326.2,331.3 324.2,331.3 322.2,331.3 320.2,331.3 318.2,331.3 316.2,331.4 314.2,331.4 312.2,331.4 310.2,331.4 308.2,331.4 306.2,331.4 304.2,331.4 302.2,331.4 300.2,331.4 298.2,331.4 296.2,331.4 294.2,331.5 292.2,331.5 290.2,331.5 288.2,331.5 286.2,331.5 284.2,331.5 282.2,331.5 280.2,331.4 278.2,331.4 276.2,331.4 274.2,331.3 272.2,331.3 270.2,331.3 268.2,331.2 266.2,331.2 264.2,331.2 262.2,331.2 260.2,331.1 258.2,331.1 256.2,331.1 254.2,331.0 252.2,331.0 250.2,331.0 248.2,330.9 246.2,330.9 244.2,330.9 242.2,330.9 240.2,330.8 238.2,330.8 236.2,330.8 234.2,330.7 232.2,330.7 230.2,330.7 228.2,330.6 226.2,330.6 224.2,330.5 222.2,330.5 220.2,330.5 218.2,330.4 216.2,330.4 214.2,330.3 212.2,330.3 210.2,330.2 208.2,330.2 206.2,330.2 204.2,330.1 202.2,330.1 200.2,330.0 198.2,330.0 196.2,329.9 194.2,329.9 192.2,329.8 190.2,329.7 188.2,329.6 186.2,329.5 184.2,329.4 182.2,329.3 180.2,329.2 178.2,329.1 176.2,329.0 174.2,328.9 172.2,328.7 170.2,328.3 168.2,328.0 166.2,327.6 164.2,327.3 162.2,326.9 160.2,326.6 158.2,326.2 156.2,325.9 154.2,325.5 152.2,324.9 150.2,323.8 148.2,322.7 146.2,321.6 144.2,320.5 142.2,319.4 140.2,318.4 138.2,317.3 136.2,316.2 134.2,315.1 132.2,314.0 130.2,312.9 128.2,311.0" fill="#acacac"/>
<polygon points="128.2,311.0 130.2,312.9 132.2,314.0 134.2,315.1 136.2,316.2 138.2,317.3 140.2,318.4 142.2,319.4 144.2,320.5 146.2,321.6 148.2,322.7 150.2,323.8 152.2,324.9 154.2,325.5 156.2,325.9 158.2,326.2 160.2,326.6 162.2,326.9 164.2,327.3 166.2,327.6 168.2,328.0 170.2,328.3 172.2,328.7 174.2,328.9 176.2,329.0 178.2,329.1 180.2,329.2 182.2,329.3 184.2,329.4 186.2,329.5 188.2,329.6 190.2,329.7 192.2,329.8 194.2,329.9 196.2,329.9 198.2,330.0 200.2,330.0 202.2,330.1 204.2,330.1 206.2,330.2 208.2,330.2 210.2,330.2 212.2,330.3 214.2,330.3 216.2,330.4 218.2,330.4 220.2,330.5 222.2,330.5 224.2,330.5 226.2,330.6 228.2,330.6 230.2,330.7 232.2,330.7 234.2,330.7 236.2,330.8 238.2,330.8 240.2,330.8 242.2,330.9 244.2,330.9 246.2,330.9 248.2,330.9 250.2,331.0 252.2,331.0 254.2,331.0 256.2,331.1 258.2,331.1 260.2,331.1 262.2,331.2 264.2,331.2 266.2,331.2 268.2,331.2 270.2,331.3 272.2,331.3 274.2,331.3 276.2,331.4 278.2,331.4 280.2,331.4 282.2,331.5 284.2,331.5 286.2,331.5 288.2,331.5 290.2,331.5 292.2,331.5 294.2,331.5 296.2,331.4 298.2,331.4 300.2,331.4 302.2,331.4 304.2,331.4 306.2,331.4 308.2,331.4 310.2,331.4 312.2,331.4 314.2,331.4 316.2,331.4 318.2,331.3 320.2,331.3 322.2,331.3 324.2,331.3 326.2,331.3 328.2,331.3 330.2,331.3 332.2,331.3 334.2,331.3 336.2,331.3 338.2,331.3 340.2,331.2 342.2,331.2 344.2,331.2 346.2,331.2 348.2,331.2 350.2,331.2 352.2,331.2 354.2,331.2 356.2,331.2 358.2,331.2 360.2,331.1 362.2,331.1 364.2,331.1 366.2,331.1 368.2,331.1 370.2,331.1 372.2,331.1 374.2,331.1 376.2,331.1 378.2,331.1 380.2,331.1 382.2,331.0 384.2,331.0 386.2,331.0 388.2,331.0 390.2,331.0 392.2,330.9 394.2,330.7 396.2,330.5 398.2,330.3 400.2,330.1 402.2,329.9 404.2,329.7 406.2,329.5 408.2,329.3 410.2,329.1 412.2,328.5 414.2,327.8 416.2,327.0 418.2,326.2 420.2,325.5 422.2,324.7 424.2,323.9 426.2,323.2 428.2,322.4 430.2,321.6 432.2,320.9 434.2,320.1 436.2,319.3 438.2,318.6 440.2,317.8 442.2,317.0 442.3,317.0 442.3,334.6 442.2,334.7 440.2,335.7 438.2,336.7 436.2,337.8 434.2,338.8 432.2,339.9 430.2,340.9 428.2,342.0 426.2,343.0 424.2,344.1 422.2,345.1 420.2,346.2 418.2,347.2 416.2,348.3 414.2,349.3 412.2,350.4 410.2,351.2 408.2,351.5 406.2,351.9 404.2,352.3 402.2,352.7 400.2,353.1 398.2,353.5 396.2,353.8 394.2,354.2 392.2,354.6 390.2,354.7 388.2,354.7 386.2,354.7 384.2,354.6 382.2,354.6 380.2,354.6 378.2,354.6 376.2,354.6 374.2,354.6 372.2,354.5 370.2,354.5 368.2,354.5 366.2,354.5 364.2,354.5 362.2,354.5 360.2,354.4 358.2,354.4 356.2,354.4 354.2,354.4 352.2,354.4 350.2,354.3 348.2,354.3 346.2,354.3 344.2,354.3 342.2,354.3 340.2,354.3 338.2,354.2 336.2,354.2 334.2,354.2 332.2,354.2 330.2,354.2 328.2,354.2 326.2,354.1 324.2,354.1 322.2,354.1 320.2,354.1 318.2,354.1 316.2,354.1 314.2,354.0 312.2,354.0 310.2,354.0 308.2,354.0 306.2,354.0 304.2,354.0 302.2,353.9 300.2,353.9 298.2,353.9 296.2,353.9 294.2,353.9 292.2,353.9 290.2,353.8 288.2,353.8 286.2,353.8 284.2,353.8 282.2,353.7 280.2,353.7 278.2,353.7 276.2,353.6 274.2,353.6 272.2,353.5 270.2,353.5 268.2,353.5 266.2,353.4 264.2,353.4 262.2,353.3 260.2,353.3 258.2,353.3 256.2,353.2 254.2,353.2 252.2,353.2 250.2,353.1 248.2,353.1 246.2,353.0 244.2,353.0 242.2,353.0 240.2,352.9 238.2,352.9 236.2,352.8 234.2,352.8 232.2,352.8 230.2,352.7 228.2,352.7 226.2,352.6 224.2,352.6 222.2,352.6 220.2,352.5 218.2,352.5 216.2,352.4 214.2,352.4 212.2,352.4 210.2,352.3 208.2,352.3 206.2,352.2 204.2,352.2 202.2,352.2 200.2,352.1 198.2,352.1 196.2,352.0 194.2,352.0 192.2,351.9 190.2,351.8 188.2,351.6 186.2,351.5 184.2,351.4 182.2,351.3 180.2,351.1 178.2,351.0 176.2,350.9 174.2,350.8 172.2,350.5 170.2,350.1 168.2,349.7 166.2,349.3 164.2,348.8 162.2,348.4 160.2,348.0 158.2,347.6 156.2,347.2 154.2,346.7 152.2,345.6 150.2,344.4 148.2,343.1 146.2,341.9 144.2,340.7 142.2,339.5 140.2,338.2 138.2,337.0 136.2,335.8 134.2,334.6 132.2,333.3 130.2,332.1 128.2,331.0" fill="#a3a3a3"/>
<polygon points="128.2,311.0 130.2,312.9 132.2,314.0 134.2,315.1 136.2,316.2 138.2,317.3 140.2,318.4 142.2,319.4 144.2,320.5 146.2,321.6 148.2,322.7 150.2,323.8 152.2,324.9 154.2,325.5 156.2,325.9 158.2,326.2 160.2,326.6 162.2,326.9 164.2,327.3 166.2,327.6 168.2,328.0 170.2,328.3 172.2,328.7 174.2,328.9 176.2,329.0 178.2,329.1 180.2,329.2 182.2,329.3 184.2,329.4 186.2,329.5 188.2,329.6 190.2,329.7 192.2,329.8 194.2,329.9 196.2,329.9 198.2,330.0 200.2,330.0 202.2,330.1 204.2,330.1 206.2,330.2 208.2,330.2 210.2,330.2 212.2,330.3 214.2,330.3 216.2,330.4 218.2,330.4 220.2,330.5 222.2,330.5 224.2,330.5 226.2,330.6 228.2,330.6 230.2,330.7 232.2,330.7 234.2,330.7 236.2,330.8 238.2,330.8 240.2,330.8 242.2,330.9 244.2,330.9 246.2,330.9 248.2,330.9 250.2,331.0 252.2,331.0 254.2,331.0 256.2,331.1 258.2,331.1 260.2,331.1 262.2,331.2 264.2,331.2 266.2,331.2 268.2,331.2 270.2,331.3 272.2,331.3 274.2,331.3 276.2,331.4 278.2,331.4 280.2,331.4 282.2,331.5 284.2,331.5 286.2,331.5 288.2,331.5 290.2,331.5 292.2,331.5 294.2,331.5 296.2,331.4 298.2,331.4 300.2,331.4 302.2,331.4 304.2,331.4 306.2,331.4 308.2,331.4 310.2,331.4 312.2,331.4 314.2,331.4 316.2,331.4 318.2,331.3 320.2,331.3 322.2,331.3 324.2,331.3 326.2,331.3 328.2,331.3 330.2,331.3 332.2,331.3 334.2,331.3 336.2,331.3 338.2,331.3 340.2,331.2 342.2,331.2 344.2,331.2 346.2,331.2 348.2,331.2 350.2,331.2 352.2,331.2 354.2,331.2 356.2,331.2 358.2,331.2 360.2,331.1 362.2,331.1 364.2,331.1 366.2,331.1 368.2,331.1 370.2,331.1 372.2,331.1 374.2,331.1 376.2,331.1 378.2,331.1 380.2,331.1 382.2,331.0 384.2,331.0 386.2,331.0 388.2,331.0 390.2,331.0 392.2,330.9 394.2,330.7 396.2,330.5 398.2,330.3 400.2,330.1 402.2,329.9 404.2,329.7 406.2,329.5 408.2,329.3 410.2,329.1 412.2,328.5 414.2,327.8 416.2,327.0 418.2,326.2 420.2,325.5 422.2,324.7 424.2,323.9 426.2,323.2 428.2,322.4 430.2,321.6 432.2,320.9 434.2,320.1 436.2,319.3 438.2,318.6 440.2,317.8 442.2,317.0 442.3,317.0 442.3,334.6 442.2,334.7 440.2,335.7 438.2,336.7 436.2,337.8 434.2,338.8 432.2,339.9 430.2,340.9 428.2,342.0 426.2,343.0 424.2,344.1 422.2,345.1 420.2,346.2 418.2,347.2 416.2,348.3 414.2,349.3 412.2,350.4 410.2,351.2 408.2,351.5 406.2,351.9 404.2,352.3 402.2,352.7 400.2,353.1 398.2,353.5 396.2,353.8 394.2,354.2 392.2,354.6 390.2,354.7 388.2,354.7 386.2,354.7 384.2,354.6 382.2,354.6 380.2,354.6 378.2,354.6 376.2,354.6 374.2,354.6 372.2,354.5 370.2,354.5 368.2,354.5 366.2,354.5 364.2,354.5 362.2,354.5 360.2,354.4 358.2,354.4 356.2,354.4 354.2,354.4 352.2,354.4 350.2,354.3 348.2,354.3 346.2,354.3 344.2,354.3 342.2,354.3 340.2,354.3 338.2,354.2 336.2,354.2 334.2,354.2 332.2,354.2 330.2,354.2 328.2,354.2 326.2,354.1 324.2,354.1 322.2,354.1 320.2,354.1 318.2,354.1 316.2,354.1 314.2,354.0 312.2,354.0 310.2,354.0 308.2,354.0 306.2,354.0 304.2,354.0 302.2,353.9 300.2,353.9 298.2,353.9 296.2,353.9 294.2,353.9 292.2,353.9 290.2,353.8 288.2,353.8 286.2,353.8 284.2,353.8 282.2,353.7 280.2,353.7 278.2,353.7 276.2,353.6 274.2,353.6 272.2,353.5 270.2,353.5 268.2,353.5 266.2,353.4 264.2,353.4 262.2,353.3 260.2,353.3 258.2,353.3 256.2,353.2 254.2,353.2 252.2,353.2 250.2,353.1 248.2,353.1 246.2,353.0 244.2,353.0 242.2,353.0 240.2,352.9 238.2,352.9 236.2,352.8 234.2,352.8 232.2,352.8 230.2,352.7 228.2,352.7 226.2,352.6 224.2,352.6 222.2,352.6 220.2,352.5 218.2,352.5 216.2,352.4 214.2,352.4 212.2,352.4 210.2,352.3 208.2,352.3 206.2,352.2 204.2,352.2 202.2,352.2 200.2,352.1 198.2,352.1 196.2,352.0 194.2,352.0 192.2,351.9 190.2,351.8 188.2,351.6 186.2,351.5 184.2,351.4 182.2,351.3 180.2,351.1 178.2,351.0 176.2,350.9 174.2,350.8 172.2,350.5 170.2,350.1 168.2,349.7 166.2,349.3 164.2,348.8 162.2,348.4 160.2,348.0 158.2,347.6 156.2,347.2 154.2,346.7 152.2,345.6 150.2,344.4 148.2,343.1 146.2,341.9 144.2,340.7 142.2,339.5 140.2,338.2 138.2,337.0 136.2,335.8 134.2,334.6 132.2,333.3 130.2,332.1 128.2,331.0" fill="url(#gRow)"/>
<polygon points="128.2,331.0 130.2,332.1 132.2,333.3 134.2,334.6 136.2,335.8 138.2,337.0 140.2,338.2 142.2,339.5 144.2,340.7 146.2,341.9 148.2,343.1 150.2,344.4 152.2,345.6 154.2,346.7 156.2,347.2 158.2,347.6 160.2,348.0 162.2,348.4 164.2,348.8 166.2,349.3 168.2,349.7 170.2,350.1 172.2,350.5 174.2,350.8 176.2,350.9 178.2,351.0 180.2,351.1 182.2,351.3 184.2,351.4 186.2,351.5 188.2,351.6 190.2,351.8 192.2,351.9 194.2,352.0 196.2,352.0 198.2,352.1 200.2,352.1 202.2,352.2 204.2,352.2 206.2,352.2 208.2,352.3 210.2,352.3 212.2,352.4 214.2,352.4 216.2,352.4 218.2,352.5 220.2,352.5 222.2,352.6 224.2,352.6 226.2,352.6 228.2,352.7 230.2,352.7 232.2,352.8 234.2,352.8 236.2,352.8 238.2,352.9 240.2,352.9 242.2,353.0 244.2,353.0 246.2,353.0 248.2,353.1 250.2,353.1 252.2,353.2 254.2,353.2 256.2,353.2 258.2,353.3 260.2,353.3 262.2,353.3 264.2,353.4 266.2,353.4 268.2,353.5 270.2,353.5 272.2,353.5 274.2,353.6 276.2,353.6 278.2,353.7 280.2,353.7 282.2,353.7 284.2,353.8 286.2,353.8 288.2,353.8 290.2,353.8 292.2,353.9 294.2,353.9 296.2,353.9 298.2,353.9 300.2,353.9 302.2,353.9 304.2,354.0 306.2,354.0 308.2,354.0 310.2,354.0 312.2,354.0 314.2,354.0 316.2,354.1 318.2,354.1 320.2,354.1 322.2,354.1 324.2,354.1 326.2,354.1 328.2,354.2 330.2,354.2 332.2,354.2 334.2,354.2 336.2,354.2 338.2,354.2 340.2,354.3 342.2,354.3 344.2,354.3 346.2,354.3 348.2,354.3 350.2,354.3 352.2,354.4 354.2,354.4 356.2,354.4 358.2,354.4 360.2,354.4 362.2,354.5 364.2,354.5 366.2,354.5 368.2,354.5 370.2,354.5 372.2,354.5 374.2,354.6 376.2,354.6 378.2,354.6 380.2,354.6 382.2,354.6 384.2,354.6 386.2,354.7 388.2,354.7 390.2,354.7 392.2,354.6 394.2,354.2 396.2,353.8 398.2,353.5 400.2,353.1 402.2,352.7 404.2,352.3 406.2,351.9 408.2,351.5 410.2,351.2 412.2,350.4 414.2,349.3 416.2,348.3 418.2,347.2 420.2,346.2 422.2,345.1 424.2,344.1 426.2,343.0 428.2,342.0 430.2,340.9 432.2,339.9 434.2,338.8 436.2,337.8 438.2,336.7 440.2,335.7 442.2,334.7 442.3,334.6 442.3,349.4 442.2,349.4 440.2,350.4 438.2,351.4 436.2,352.3 434.2,353.3 432.2,354.3 430.2,355.2 428.2,356.2 426.2,357.2 424.2,358.1 422.2,359.1 420.2,360.1 418.2,361.0 416.2,362.0 414.2,363.0 412.2,363.9 410.2,364.7 408.2,365.3 406.2,365.8 404.2,366.4 402.2,367.0 400.2,367.5 398.2,368.1 396.2,368.6 394.2,369.2 392.2,369.8 390.2,369.9 388.2,369.9 386.2,369.9 384.2,369.9 382.2,369.9 380.2,369.9 378.2,370.0 376.2,370.0 374.2,370.0 372.2,370.0 370.2,370.0 368.2,370.0 366.2,370.0 364.2,370.0 362.2,370.0 360.2,370.0 358.2,370.0 356.2,370.0 354.2,370.0 352.2,370.0 350.2,370.1 348.2,370.1 346.2,370.1 344.2,370.1 342.2,370.1 340.2,370.1 338.2,370.1 336.2,370.1 334.2,370.1 332.2,370.1 330.2,370.1 328.2,370.1 326.2,370.1 324.2,370.2 322.2,370.2 320.2,370.2 318.2,370.2 316.2,370.2 314.2,370.2 312.2,370.2 310.2,370.2 308.2,370.2 306.2,370.2 304.2,370.2 302.2,370.2 300.2,370.2 298.2,370.3 296.2,370.3 294.2,370.3 292.2,370.3 290.2,370.3 288.2,370.3 286.2,370.3 284.2,370.3 282.2,370.3 280.2,370.2 278.2,370.2 276.2,370.2 274.2,370.1 272.2,370.1 270.2,370.1 268.2,370.0 266.2,370.0 264.2,370.0 262.2,369.9 260.2,369.9 258.2,369.9 256.2,369.8 254.2,369.8 252.2,369.8 250.2,369.7 248.2,369.7 246.2,369.7 244.2,369.6 242.2,369.6 240.2,369.6 238.2,369.5 236.2,369.5 234.2,369.5 232.2,369.4 230.2,369.4 228.2,369.4 226.2,369.3 224.2,369.3 222.2,369.3 220.2,369.2 218.2,369.2 216.2,369.2 214.2,369.1 212.2,369.1 210.2,369.1 208.2,369.0 206.2,369.0 204.2,369.0 202.2,368.9 200.2,368.9 198.2,368.9 196.2,368.8 194.2,368.8 192.2,368.6 190.2,368.5 188.2,368.3 186.2,368.1 184.2,368.0 182.2,367.8 180.2,367.6 178.2,367.4 176.2,367.3 174.2,367.1 172.2,366.9 170.2,366.6 168.2,366.2 166.2,365.9 164.2,365.6 162.2,365.3 160.2,365.0 158.2,364.7 156.2,364.3 154.2,364.0 152.2,362.7 150.2,361.3 148.2,359.8 146.2,358.4 144.2,356.9 142.2,355.5 140.2,354.1 138.2,352.6 136.2,351.2 134.2,349.7 132.2,348.3 130.2,346.8 128.2,346.0" fill="#a0a0a0"/>
<polygon points="128.2,331.0 130.2,332.1 132.2,333.3 134.2,334.6 136.2,335.8 138.2,337.0 140.2,338.2 142.2,339.5 144.2,340.7 146.2,341.9 148.2,343.1 150.2,344.4 152.2,345.6 154.2,346.7 156.2,347.2 158.2,347.6 160.2,348.0 162.2,348.4 164.2,348.8 166.2,349.3 168.2,349.7 170.2,350.1 172.2,350.5 174.2,350.8 176.2,350.9 178.2,351.0 180.2,351.1 182.2,351.3 184.2,351.4 186.2,351.5 188.2,351.6 190.2,351.8 192.2,351.9 194.2,352.0 196.2,352.0 198.2,352.1 200.2,352.1 202.2,352.2 204.2,352.2 206.2,352.2 208.2,352.3 210.2,352.3 212.2,352.4 214.2,352.4 216.2,352.4 218.2,352.5 220.2,352.5 222.2,352.6 224.2,352.6 226.2,352.6 228.2,352.7 230.2,352.7 232.2,352.8 234.2,352.8 236.2,352.8 238.2,352.9 240.2,352.9 242.2,353.0 244.2,353.0 246.2,353.0 248.2,353.1 250.2,353.1 252.2,353.2 254.2,353.2 256.2,353.2 258.2,353.3 260.2,353.3 262.2,353.3 264.2,353.4 266.2,353.4 268.2,353.5 270.2,353.5 272.2,353.5 274.2,353.6 276.2,353.6 278.2,353.7 280.2,353.7 282.2,353.7 284.2,353.8 286.2,353.8 288.2,353.8 290.2,353.8 292.2,353.9 294.2,353.9 296.2,353.9 298.2,353.9 300.2,353.9 302.2,353.9 304.2,354.0 306.2,354.0 308.2,354.0 310.2,354.0 312.2,354.0 314.2,354.0 316.2,354.1 318.2,354.1 320.2,354.1 322.2,354.1 324.2,354.1 326.2,354.1 328.2,354.2 330.2,354.2 332.2,354.2 334.2,354.2 336.2,354.2 338.2,354.2 340.2,354.3 342.2,354.3 344.2,354.3 346.2,354.3 348.2,354.3 350.2,354.3 352.2,354.4 354.2,354.4 356.2,354.4 358.2,354.4 360.2,354.4 362.2,354.5 364.2,354.5 366.2,354.5 368.2,354.5 370.2,354.5 372.2,354.5 374.2,354.6 376.2,354.6 378.2,354.6 380.2,354.6 382.2,354.6 384.2,354.6 386.2,354.7 388.2,354.7 390.2,354.7 392.2,354.6 394.2,354.2 396.2,353.8 398.2,353.5 400.2,353.1 402.2,352.7 404.2,352.3 406.2,351.9 408.2,351.5 410.2,351.2 412.2,350.4 414.2,349.3 416.2,348.3 418.2,347.2 420.2,346.2 422.2,345.1 424.2,344.1 426.2,343.0 428.2,342.0 430.2,340.9 432.2,339.9 434.2,338.8 436.2,337.8 438.2,336.7 440.2,335.7 442.2,334.7 442.3,334.6 442.3,349.4 442.2,349.4 440.2,350.4 438.2,351.4 436.2,352.3 434.2,353.3 432.2,354.3 430.2,355.2 428.2,356.2 426.2,357.2 424.2,358.1 422.2,359.1 420.2,360.1 418.2,361.0 416.2,362.0 414.2,363.0 412.2,363.9 410.2,364.7 408.2,365.3 406.2,365.8 404.2,366.4 402.2,367.0 400.2,367.5 398.2,368.1 396.2,368.6 394.2,369.2 392.2,369.8 390.2,369.9 388.2,369.9 386.2,369.9 384.2,369.9 382.2,369.9 380.2,369.9 378.2,370.0 376.2,370.0 374.2,370.0 372.2,370.0 370.2,370.0 368.2,370.0 366.2,370.0 364.2,370.0 362.2,370.0 360.2,370.0 358.2,370.0 356.2,370.0 354.2,370.0 352.2,370.0 350.2,370.1 348.2,370.1 346.2,370.1 344.2,370.1 342.2,370.1 340.2,370.1 338.2,370.1 336.2,370.1 334.2,370.1 332.2,370.1 330.2,370.1 328.2,370.1 326.2,370.1 324.2,370.2 322.2,370.2 320.2,370.2 318.2,370.2 316.2,370.2 314.2,370.2 312.2,370.2 310.2,370.2 308.2,370.2 306.2,370.2 304.2,370.2 302.2,370.2 300.2,370.2 298.2,370.3 296.2,370.3 294.2,370.3 292.2,370.3 290.2,370.3 288.2,370.3 286.2,370.3 284.2,370.3 282.2,370.3 280.2,370.2 278.2,370.2 276.2,370.2 274.2,370.1 272.2,370.1 270.2,370.1 268.2,370.0 266.2,370.0 264.2,370.0 262.2,369.9 260.2,369.9 258.2,369.9 256.2,369.8 254.2,369.8 252.2,369.8 250.2,369.7 248.2,369.7 246.2,369.7 244.2,369.6 242.2,369.6 240.2,369.6 238.2,369.5 236.2,369.5 234.2,369.5 232.2,369.4 230.2,369.4 228.2,369.4 226.2,369.3 224.2,369.3 222.2,369.3 220.2,369.2 218.2,369.2 216.2,369.2 214.2,369.1 212.2,369.1 210.2,369.1 208.2,369.0 206.2,369.0 204.2,369.0 202.2,368.9 200.2,368.9 198.2,368.9 196.2,368.8 194.2,368.8 192.2,368.6 190.2,368.5 188.2,368.3 186.2,368.1 184.2,368.0 182.2,367.8 180.2,367.6 178.2,367.4 176.2,367.3 174.2,367.1 172.2,366.9 170.2,366.6 168.2,366.2 166.2,365.9 164.2,365.6 162.2,365.3 160.2,365.0 158.2,364.7 156.2,364.3 154.2,364.0 152.2,362.7 150.2,361.3 148.2,359.8 146.2,358.4 144.2,356.9 142.2,355.5 140.2,354.1 138.2,352.6 136.2,351.2 134.2,349.7 132.2,348.3 130.2,346.8 128.2,346.0" fill="url(#gRow)"/>
<polygon points="128.2,346.0 130.2,346.8 132.2,348.3 134.2,349.7 136.2,351.2 138.2,352.6 140.2,354.1 142.2,355.5 144.2,356.9 146.2,358.4 148.2,359.8 150.2,361.3 152.2,362.7 154.2,364.0 156.2,364.3 158.2,364.7 160.2,365.0 162.2,365.3 164.2,365.6 166.2,365.9 168.2,366.2 170.2,366.6 172.2,366.9 174.2,367.1 176.2,367.3 178.2,367.4 180.2,367.6 182.2,367.8 184.2,368.0 186.2,368.1 188.2,368.3 190.2,368.5 192.2,368.6 194.2,368.8 196.2,368.8 198.2,368.9 200.2,368.9 202.2,368.9 204.2,369.0 206.2,369.0 208.2,369.0 210.2,369.1 212.2,369.1 214.2,369.1 216.2,369.2 218.2,369.2 220.2,369.2 222.2,369.3 224.2,369.3 226.2,369.3 228.2,369.4 230.2,369.4 232.2,369.4 234.2,369.5 236.2,369.5 238.2,369.5 240.2,369.6 242.2,369.6 244.2,369.6 246.2,369.7 248.2,369.7 250.2,369.7 252.2,369.8 254.2,369.8 256.2,369.8 258.2,369.9 260.2,369.9 262.2,369.9 264.2,370.0 266.2,370.0 268.2,370.0 270.2,370.1 272.2,370.1 274.2,370.1 276.2,370.2 278.2,370.2 280.2,370.2 282.2,370.3 284.2,370.3 286.2,370.3 288.2,370.3 290.2,370.3 292.2,370.3 294.2,370.3 296.2,370.3 298.2,370.3 300.2,370.2 302.2,370.2 304.2,370.2 306.2,370.2 308.2,370.2 310.2,370.2 312.2,370.2 314.2,370.2 316.2,370.2 318.2,370.2 320.2,370.2 322.2,370.2 324.2,370.2 326.2,370.1 328.2,370.1 330.2,370.1 332.2,370.1 334.2,370.1 336.2,370.1 338.2,370.1 340.2,370.1 342.2,370.1 344.2,370.1 346.2,370.1 348.2,370.1 350.2,370.1 352.2,370.0 354.2,370.0 356.2,370.0 358.2,370.0 360.2,370.0 362.2,370.0 364.2,370.0 366.2,370.0 368.2,370.0 370.2,370.0 372.2,370.0 374.2,370.0 376.2,370.0 378.2,370.0 380.2,369.9 382.2,369.9 384.2,369.9 386.2,369.9 388.2,369.9 390.2,369.9 392.2,369.8 394.2,369.2 396.2,368.6 398.2,368.1 400.2,367.5 402.2,367.0 404.2,366.4 406.2,365.8 408.2,365.3 410.2,364.7 412.2,363.9 414.2,363.0 416.2,362.0 418.2,361.0 420.2,360.1 422.2,359.1 424.2,358.1 426.2,357.2 428.2,356.2 430.2,355.2 432.2,354.3 434.2,353.3 436.2,352.3 438.2,351.4 440.2,350.4 442.2,349.4 442.3,349.4 442.3,362.0 442.2,362.1 440.2,363.5 438.2,365.0 436.2,366.5 434.2,367.9 432.2,369.4 430.2,370.9 428.2,372.0 426.2,373.1 424.2,374.2 422.2,375.3 420.2,376.4 418.2,377.5 416.2,378.6 414.2,379.6 412.2,380.7 410.2,381.6 408.2,382.1 406.2,382.5 404.2,383.0 402.2,383.5 400.2,383.9 398.2,384.4 396.2,384.9 394.2,385.3 392.2,385.8 390.2,385.9 388.2,385.9 386.2,385.9 384.2,385.9 382.2,385.9 380.2,385.9 378.2,385.8 376.2,385.8 374.2,385.8 372.2,385.8 370.2,385.8 368.2,385.8 366.2,385.8 364.2,385.8 362.2,385.8 360.2,385.8 358.2,385.8 356.2,385.8 354.2,385.8 352.2,385.8 350.2,385.7 348.2,385.7 346.2,385.7 344.2,385.7 342.2,385.7 340.2,385.7 338.2,385.7 336.2,385.7 334.2,385.7 332.2,385.7 330.2,385.7 328.2,385.7 326.2,385.7 324.2,385.6 322.2,385.6 320.2,385.6 318.2,385.6 316.2,385.6 314.2,385.6 312.2,385.6 310.2,385.6 308.2,385.6 306.2,385.6 304.2,385.6 302.2,385.6 300.2,385.6 298.2,385.5 296.2,385.5 294.2,385.5 292.2,385.5 290.2,385.5 288.2,385.5 286.2,385.5 284.2,385.5 282.2,385.4 280.2,385.4 278.2,385.3 276.2,385.3 274.2,385.2 272.2,385.2 270.2,385.1 268.2,385.1 266.2,385.0 264.2,385.0 262.2,384.9 260.2,384.9 258.2,384.8 256.2,384.8 254.2,384.7 252.2,384.7 250.2,384.6 248.2,384.6 246.2,384.5 244.2,384.5 242.2,384.4 240.2,384.4 238.2,384.3 236.2,384.3 234.2,384.2 232.2,384.2 230.2,384.1 228.2,384.1 226.2,384.0 224.2,384.0 222.2,383.9 220.2,383.9 218.2,383.8 216.2,383.8 214.2,383.7 212.2,383.7 210.2,383.6 208.2,383.6 206.2,383.5 204.2,383.5 202.2,383.4 200.2,383.4 198.2,383.3 196.2,383.3 194.2,383.2 192.2,383.0 190.2,382.9 188.2,382.7 186.2,382.5 184.2,382.3 182.2,382.1 180.2,382.0 178.2,381.8 176.2,381.6 174.2,381.4 172.2,381.1 170.2,380.7 168.2,380.2 166.2,379.8 164.2,379.3 162.2,378.9 160.2,378.4 158.2,378.0 156.2,377.5 154.2,377.0 152.2,375.7 150.2,374.3 148.2,372.9 146.2,371.4 144.2,370.0 142.2,368.6 140.2,367.1 138.2,365.2 136.2,363.2 134.2,361.2 132.2,359.2 130.2,357.1 128.2,355.0" fill="#9d9d9d"/>
<polygon points="128.2,346.0 130.2,346.8 132.2,348.3 134.2,349.7 136.2,351.2 138.2,352.6 140.2,354.1 142.2,355.5 144.2,356.9 146.2,358.4 148.2,359.8 150.2,361.3 152.2,362.7 154.2,364.0 156.2,364.3 158.2,364.7 160.2,365.0 162.2,365.3 164.2,365.6 166.2,365.9 168.2,366.2 170.2,366.6 172.2,366.9 174.2,367.1 176.2,367.3 178.2,367.4 180.2,367.6 182.2,367.8 184.2,368.0 186.2,368.1 188.2,368.3 190.2,368.5 192.2,368.6 194.2,368.8 196.2,368.8 198.2,368.9 200.2,368.9 202.2,368.9 204.2,369.0 206.2,369.0 208.2,369.0 210.2,369.1 212.2,369.1 214.2,369.1 216.2,369.2 218.2,369.2 220.2,369.2 222.2,369.3 224.2,369.3 226.2,369.3 228.2,369.4 230.2,369.4 232.2,369.4 234.2,369.5 236.2,369.5 238.2,369.5 240.2,369.6 242.2,369.6 244.2,369.6 246.2,369.7 248.2,369.7 250.2,369.7 252.2,369.8 254.2,369.8 256.2,369.8 258.2,369.9 260.2,369.9 262.2,369.9 264.2,370.0 266.2,370.0 268.2,370.0 270.2,370.1 272.2,370.1 274.2,370.1 276.2,370.2 278.2,370.2 280.2,370.2 282.2,370.3 284.2,370.3 286.2,370.3 288.2,370.3 290.2,370.3 292.2,370.3 294.2,370.3 296.2,370.3 298.2,370.3 300.2,370.2 302.2,370.2 304.2,370.2 306.2,370.2 308.2,370.2 310.2,370.2 312.2,370.2 314.2,370.2 316.2,370.2 318.2,370.2 320.2,370.2 322.2,370.2 324.2,370.2 326.2,370.1 328.2,370.1 330.2,370.1 332.2,370.1 334.2,370.1 336.2,370.1 338.2,370.1 340.2,370.1 342.2,370.1 344.2,370.1 346.2,370.1 348.2,370.1 350.2,370.1 352.2,370.0 354.2,370.0 356.2,370.0 358.2,370.0 360.2,370.0 362.2,370.0 364.2,370.0 366.2,370.0 368.2,370.0 370.2,370.0 372.2,370.0 374.2,370.0 376.2,370.0 378.2,370.0 380.2,369.9 382.2,369.9 384.2,369.9 386.2,369.9 388.2,369.9 390.2,369.9 392.2,369.8 394.2,369.2 396.2,368.6 398.2,368.1 400.2,367.5 402.2,367.0 404.2,366.4 406.2,365.8 408.2,365.3 410.2,364.7 412.2,363.9 414.2,363.0 416.2,362.0 418.2,361.0 420.2,360.1 422.2,359.1 424.2,358.1 426.2,357.2 428.2,356.2 430.2,355.2 432.2,354.3 434.2,353.3 436.2,352.3 438.2,351.4 440.2,350.4 442.2,349.4 442.3,349.4 442.3,362.0 442.2,362.1 440.2,363.5 438.2,365.0 436.2,366.5 434.2,367.9 432.2,369.4 430.2,370.9 428.2,372.0 426.2,373.1 424.2,374.2 422.2,375.3 420.2,376.4 418.2,377.5 416.2,378.6 414.2,379.6 412.2,380.7 410.2,381.6 408.2,382.1 406.2,382.5 404.2,383.0 402.2,383.5 400.2,383.9 398.2,384.4 396.2,384.9 394.2,385.3 392.2,385.8 390.2,385.9 388.2,385.9 386.2,385.9 384.2,385.9 382.2,385.9 380.2,385.9 378.2,385.8 376.2,385.8 374.2,385.8 372.2,385.8 370.2,385.8 368.2,385.8 366.2,385.8 364.2,385.8 362.2,385.8 360.2,385.8 358.2,385.8 356.2,385.8 354.2,385.8 352.2,385.8 350.2,385.7 348.2,385.7 346.2,385.7 344.2,385.7 342.2,385.7 340.2,385.7 338.2,385.7 336.2,385.7 334.2,385.7 332.2,385.7 330.2,385.7 328.2,385.7 326.2,385.7 324.2,385.6 322.2,385.6 320.2,385.6 318.2,385.6 316.2,385.6 314.2,385.6 312.2,385.6 310.2,385.6 308.2,385.6 306.2,385.6 304.2,385.6 302.2,385.6 300.2,385.6 298.2,385.5 296.2,385.5 294.2,385.5 292.2,385.5 290.2,385.5 288.2,385.5 286.2,385.5 284.2,385.5 282.2,385.4 280.2,385.4 278.2,385.3 276.2,385.3 274.2,385.2 272.2,385.2 270.2,385.1 268.2,385.1 266.2,385.0 264.2,385.0 262.2,384.9 260.2,384.9 258.2,384.8 256.2,384.8 254.2,384.7 252.2,384.7 250.2,384.6 248.2,384.6 246.2,384.5 244.2,384.5 242.2,384.4 240.2,384.4 238.2,384.3 236.2,384.3 234.2,384.2 232.2,384.2 230.2,384.1 228.2,384.1 226.2,384.0 224.2,384.0 222.2,383.9 220.2,383.9 218.2,383.8 216.2,383.8 214.2,383.7 212.2,383.7 210.2,383.6 208.2,383.6 206.2,383.5 204.2,383.5 202.2,383.4 200.2,383.4 198.2,383.3 196.2,383.3 194.2,383.2 192.2,383.0 190.2,382.9 188.2,382.7 186.2,382.5 184.2,382.3 182.2,382.1 180.2,382.0 178.2,381.8 176.2,381.6 174.2,381.4 172.2,381.1 170.2,380.7 168.2,380.2 166.2,379.8 164.2,379.3 162.2,378.9 160.2,378.4 158.2,378.0 156.2,377.5 154.2,377.0 152.2,375.7 150.2,374.3 148.2,372.9 146.2,371.4 144.2,370.0 142.2,368.6 140.2,367.1 138.2,365.2 136.2,363.2 134.2,361.2 132.2,359.2 130.2,357.1 128.2,355.0" fill="url(#gRow)"/>
<path d="M128.2,330.7 L130.2,331.8 L132.2,333.0 L134.2,334.3 L136.2,335.5 L138.2,336.7 L140.2,337.9 L142.2,339.2 L144.2,340.4 L146.2,341.6 L148.2,342.8 L150.2,344.1 L152.2,345.3 L154.2,346.4 L156.2,346.9 L158.2,347.3 L160.2,347.7 L162.2,348.1 L164.2,348.5 L166.2,349.0 L168.2,349.4 L170.2,349.8 L172.2,350.2 L174.2,350.5 L176.2,350.6 L178.2,350.7 L180.2,350.8 L182.2,351.0 L184.2,351.1 L186.2,351.2 L188.2,351.3 L190.2,351.5 L192.2,351.6 L194.2,351.7 L196.2,351.7 L198.2,351.8 L200.2,351.8 L202.2,351.9 L204.2,351.9 L206.2,351.9 L208.2,352.0 L210.2,352.0 L212.2,352.1 L214.2,352.1 L216.2,352.1 L218.2,352.2 L220.2,352.2 L222.2,352.3 L224.2,352.3 L226.2,352.3 L228.2,352.4 L230.2,352.4 L232.2,352.5 L234.2,352.5 L236.2,352.5 L238.2,352.6 L240.2,352.6 L242.2,352.7 L244.2,352.7 L246.2,352.7 L248.2,352.8 L250.2,352.8 L252.2,352.9 L254.2,352.9 L256.2,352.9 L258.2,353.0 L260.2,353.0 L262.2,353.0 L264.2,353.1 L266.2,353.1 L268.2,353.2 L270.2,353.2 L272.2,353.2 L274.2,353.3 L276.2,353.3 L278.2,353.4 L280.2,353.4 L282.2,353.4 L284.2,353.5 L286.2,353.5 L288.2,353.5 L290.2,353.5 L292.2,353.6 L294.2,353.6 L296.2,353.6 L298.2,353.6 L300.2,353.6 L302.2,353.6 L304.2,353.7 L306.2,353.7 L308.2,353.7 L310.2,353.7 L312.2,353.7 L314.2,353.7 L316.2,353.8 L318.2,353.8 L320.2,353.8 L322.2,353.8 L324.2,353.8 L326.2,353.8 L328.2,353.9 L330.2,353.9 L332.2,353.9 L334.2,353.9 L336.2,353.9 L338.2,353.9 L340.2,354.0 L342.2,354.0 L344.2,354.0 L346.2,354.0 L348.2,354.0 L350.2,354.0 L352.2,354.1 L354.2,354.1 L356.2,354.1 L358.2,354.1 L360.2,354.1 L362.2,354.2 L364.2,354.2 L366.2,354.2 L368.2,354.2 L370.2,354.2 L372.2,354.2 L374.2,354.3 L376.2,354.3 L378.2,354.3 L380.2,354.3 L382.2,354.3 L384.2,354.3 L386.2,354.4 L388.2,354.4 L390.2,354.4 L392.2,354.3 L394.2,353.9 L396.2,353.5 L398.2,353.2 L400.2,352.8 L402.2,352.4 L404.2,352.0 L406.2,351.6 L408.2,351.2 L410.2,350.9 L412.2,350.1 L414.2,349.0 L416.2,348.0 L418.2,346.9 L420.2,345.9 L422.2,344.8 L424.2,343.8 L426.2,342.7 L428.2,341.7 L430.2,340.6 L432.2,339.6 L434.2,338.5 L436.2,337.5 L438.2,336.4 L440.2,335.4 L442.2,334.4 L442.3,334.3" fill="none" stroke="#6c6c6c" stroke-width="1.8"/>
<path d="M128.2,332.7 L130.2,333.8 L132.2,335.0 L134.2,336.3 L136.2,337.5 L138.2,338.7 L140.2,339.9 L142.2,341.2 L144.2,342.4 L146.2,343.6 L148.2,344.8 L150.2,346.1 L152.2,347.3 L154.2,348.4 L156.2,348.9 L158.2,349.3 L160.2,349.7 L162.2,350.1 L164.2,350.5 L166.2,351.0 L168.2,351.4 L170.2,351.8 L172.2,352.2 L174.2,352.5 L176.2,352.6 L178.2,352.7 L180.2,352.8 L182.2,353.0 L184.2,353.1 L186.2,353.2 L188.2,353.3 L190.2,353.5 L192.2,353.6 L194.2,353.7 L196.2,353.7 L198.2,353.8 L200.2,353.8 L202.2,353.9 L204.2,353.9 L206.2,353.9 L208.2,354.0 L210.2,354.0 L212.2,354.1 L214.2,354.1 L216.2,354.1 L218.2,354.2 L220.2,354.2 L222.2,354.3 L224.2,354.3 L226.2,354.3 L228.2,354.4 L230.2,354.4 L232.2,354.5 L234.2,354.5 L236.2,354.5 L238.2,354.6 L240.2,354.6 L242.2,354.7 L244.2,354.7 L246.2,354.7 L248.2,354.8 L250.2,354.8 L252.2,354.9 L254.2,354.9 L256.2,354.9 L258.2,355.0 L260.2,355.0 L262.2,355.0 L264.2,355.1 L266.2,355.1 L268.2,355.2 L270.2,355.2 L272.2,355.2 L274.2,355.3 L276.2,355.3 L278.2,355.4 L280.2,355.4 L282.2,355.4 L284.2,355.5 L286.2,355.5 L288.2,355.5 L290.2,355.5 L292.2,355.6 L294.2,355.6 L296.2,355.6 L298.2,355.6 L300.2,355.6 L302.2,355.6 L304.2,355.7 L306.2,355.7 L308.2,355.7 L310.2,355.7 L312.2,355.7 L314.2,355.7 L316.2,355.8 L318.2,355.8 L320.2,355.8 L322.2,355.8 L324.2,355.8 L326.2,355.8 L328.2,355.9 L330.2,355.9 L332.2,355.9 L334.2,355.9 L336.2,355.9 L338.2,355.9 L340.2,356.0 L342.2,356.0 L344.2,356.0 L346.2,356.0 L348.2,356.0 L350.2,356.0 L352.2,356.1 L354.2,356.1 L356.2,356.1 L358.2,356.1 L360.2,356.1 L362.2,356.2 L364.2,356.2 L366.2,356.2 L368.2,356.2 L370.2,356.2 L372.2,356.2 L374.2,356.3 L376.2,356.3 L378.2,356.3 L380.2,356.3 L382.2,356.3 L384.2,356.3 L386.2,356.4 L388.2,356.4 L390.2,356.4 L392.2,356.3 L394.2,355.9 L396.2,355.5 L398.2,355.2 L400.2,354.8 L402.2,354.4 L404.2,354.0 L406.2,353.6 L408.2,353.2 L410.2,352.9 L412.2,352.1 L414.2,351.0 L416.2,350.0 L418.2,348.9 L420.2,347.9 L422.2,346.8 L424.2,345.8 L426.2,344.7 L428.2,343.7 L430.2,342.6 L432.2,341.6 L434.2,340.5 L436.2,339.5 L438.2,338.4 L440.2,337.4 L442.2,336.4 L442.3,336.3" fill="none" stroke="#adadad" stroke-width="1.2"/>
<path d="M128.2,345.7 L130.2,346.5 L132.2,348.0 L134.2,349.4 L136.2,350.9 L138.2,352.3 L140.2,353.8 L142.2,355.2 L144.2,356.6 L146.2,358.1 L148.2,359.5 L150.2,361.0 L152.2,362.4 L154.2,363.7 L156.2,364.0 L158.2,364.4 L160.2,364.7 L162.2,365.0 L164.2,365.3 L166.2,365.6 L168.2,365.9 L170.2,366.3 L172.2,366.6 L174.2,366.8 L176.2,367.0 L178.2,367.1 L180.2,367.3 L182.2,367.5 L184.2,367.7 L186.2,367.8 L188.2,368.0 L190.2,368.2 L192.2,368.3 L194.2,368.5 L196.2,368.5 L198.2,368.6 L200.2,368.6 L202.2,368.6 L204.2,368.7 L206.2,368.7 L208.2,368.7 L210.2,368.8 L212.2,368.8 L214.2,368.8 L216.2,368.9 L218.2,368.9 L220.2,368.9 L222.2,369.0 L224.2,369.0 L226.2,369.0 L228.2,369.1 L230.2,369.1 L232.2,369.1 L234.2,369.2 L236.2,369.2 L238.2,369.2 L240.2,369.3 L242.2,369.3 L244.2,369.3 L246.2,369.4 L248.2,369.4 L250.2,369.4 L252.2,369.5 L254.2,369.5 L256.2,369.5 L258.2,369.6 L260.2,369.6 L262.2,369.6 L264.2,369.7 L266.2,369.7 L268.2,369.7 L270.2,369.8 L272.2,369.8 L274.2,369.8 L276.2,369.9 L278.2,369.9 L280.2,369.9 L282.2,370.0 L284.2,370.0 L286.2,370.0 L288.2,370.0 L290.2,370.0 L292.2,370.0 L294.2,370.0 L296.2,370.0 L298.2,370.0 L300.2,369.9 L302.2,369.9 L304.2,369.9 L306.2,369.9 L308.2,369.9 L310.2,369.9 L312.2,369.9 L314.2,369.9 L316.2,369.9 L318.2,369.9 L320.2,369.9 L322.2,369.9 L324.2,369.9 L326.2,369.8 L328.2,369.8 L330.2,369.8 L332.2,369.8 L334.2,369.8 L336.2,369.8 L338.2,369.8 L340.2,369.8 L342.2,369.8 L344.2,369.8 L346.2,369.8 L348.2,369.8 L350.2,369.8 L352.2,369.7 L354.2,369.7 L356.2,369.7 L358.2,369.7 L360.2,369.7 L362.2,369.7 L364.2,369.7 L366.2,369.7 L368.2,369.7 L370.2,369.7 L372.2,369.7 L374.2,369.7 L376.2,369.7 L378.2,369.7 L380.2,369.6 L382.2,369.6 L384.2,369.6 L386.2,369.6 L388.2,369.6 L390.2,369.6 L392.2,369.5 L394.2,368.9 L396.2,368.3 L398.2,367.8 L400.2,367.2 L402.2,366.7 L404.2,366.1 L406.2,365.5 L408.2,365.0 L410.2,364.4 L412.2,363.6 L414.2,362.7 L416.2,361.7 L418.2,360.7 L420.2,359.8 L422.2,358.8 L424.2,357.8 L426.2,356.9 L428.2,355.9 L430.2,354.9 L432.2,354.0 L434.2,353.0 L436.2,352.0 L438.2,351.1 L440.2,350.1 L442.2,349.1 L442.3,349.1" fill="none" stroke="#6c6c6c" stroke-width="1.8"/>
<path d="M128.2,347.7 L130.2,348.5 L132.2,350.0 L134.2,351.4 L136.2,352.9 L138.2,354.3 L140.2,355.8 L142.2,357.2 L144.2,358.6 L146.2,360.1 L148.2,361.5 L150.2,363.0 L152.2,364.4 L154.2,365.7 L156.2,366.0 L158.2,366.4 L160.2,366.7 L162.2,367.0 L164.2,367.3 L166.2,367.6 L168.2,367.9 L170.2,368.3 L172.2,368.6 L174.2,368.8 L176.2,369.0 L178.2,369.1 L180.2,369.3 L182.2,369.5 L184.2,369.7 L186.2,369.8 L188.2,370.0 L190.2,370.2 L192.2,370.3 L194.2,370.5 L196.2,370.5 L198.2,370.6 L200.2,370.6 L202.2,370.6 L204.2,370.7 L206.2,370.7 L208.2,370.7 L210.2,370.8 L212.2,370.8 L214.2,370.8 L216.2,370.9 L218.2,370.9 L220.2,370.9 L222.2,371.0 L224.2,371.0 L226.2,371.0 L228.2,371.1 L230.2,371.1 L232.2,371.1 L234.2,371.2 L236.2,371.2 L238.2,371.2 L240.2,371.3 L242.2,371.3 L244.2,371.3 L246.2,371.4 L248.2,371.4 L250.2,371.4 L252.2,371.5 L254.2,371.5 L256.2,371.5 L258.2,371.6 L260.2,371.6 L262.2,371.6 L264.2,371.7 L266.2,371.7 L268.2,371.7 L270.2,371.8 L272.2,371.8 L274.2,371.8 L276.2,371.9 L278.2,371.9 L280.2,371.9 L282.2,372.0 L284.2,372.0 L286.2,372.0 L288.2,372.0 L290.2,372.0 L292.2,372.0 L294.2,372.0 L296.2,372.0 L298.2,372.0 L300.2,371.9 L302.2,371.9 L304.2,371.9 L306.2,371.9 L308.2,371.9 L310.2,371.9 L312.2,371.9 L314.2,371.9 L316.2,371.9 L318.2,371.9 L320.2,371.9 L322.2,371.9 L324.2,371.9 L326.2,371.8 L328.2,371.8 L330.2,371.8 L332.2,371.8 L334.2,371.8 L336.2,371.8 L338.2,371.8 L340.2,371.8 L342.2,371.8 L344.2,371.8 L346.2,371.8 L348.2,371.8 L350.2,371.8 L352.2,371.7 L354.2,371.7 L356.2,371.7 L358.2,371.7 L360.2,371.7 L362.2,371.7 L364.2,371.7 L366.2,371.7 L368.2,371.7 L370.2,371.7 L372.2,371.7 L374.2,371.7 L376.2,371.7 L378.2,371.7 L380.2,371.6 L382.2,371.6 L384.2,371.6 L386.2,371.6 L388.2,371.6 L390.2,371.6 L392.2,371.5 L394.2,370.9 L396.2,370.3 L398.2,369.8 L400.2,369.2 L402.2,368.7 L404.2,368.1 L406.2,367.5 L408.2,367.0 L410.2,366.4 L412.2,365.6 L414.2,364.7 L416.2,363.7 L418.2,362.7 L420.2,361.8 L422.2,360.8 L424.2,359.8 L426.2,358.9 L428.2,357.9 L430.2,356.9 L432.2,356.0 L434.2,355.0 L436.2,354.0 L438.2,353.1 L440.2,352.1 L442.2,351.1 L442.3,351.1" fill="none" stroke="#adadad" stroke-width="1.2"/>
<path d="M128.2,311.0 L130.2,312.9 L132.2,314.0 L134.2,315.1 L136.2,316.2 L138.2,317.3 L140.2,318.4 L142.2,319.4 L144.2,320.5 L146.2,321.6 L148.2,322.7 L150.2,323.8 L152.2,324.9 L154.2,325.5 L156.2,325.9 L158.2,326.2 L160.2,326.6 L162.2,326.9 L164.2,327.3 L166.2,327.6 L168.2,328.0 L170.2,328.3 L172.2,328.7 L174.2,328.9 L176.2,329.0 L178.2,329.1 L180.2,329.2 L182.2,329.3 L184.2,329.4 L186.2,329.5 L188.2,329.6 L190.2,329.7 L192.2,329.8 L194.2,329.9 L196.2,329.9 L198.2,330.0 L200.2,330.0 L202.2,330.1 L204.2,330.1 L206.2,330.2 L208.2,330.2 L210.2,330.2 L212.2,330.3 L214.2,330.3 L216.2,330.4 L218.2,330.4 L220.2,330.5 L222.2,330.5 L224.2,330.5 L226.2,330.6 L228.2,330.6 L230.2,330.7 L232.2,330.7 L234.2,330.7 L236.2,330.8 L238.2,330.8 L240.2,330.8 L242.2,330.9 L244.2,330.9 L246.2,330.9 L248.2,330.9 L250.2,331.0 L252.2,331.0 L254.2,331.0 L256.2,331.1 L258.2,331.1 L260.2,331.1 L262.2,331.2 L264.2,331.2 L266.2,331.2 L268.2,331.2 L270.2,331.3 L272.2,331.3 L274.2,331.3 L276.2,331.4 L278.2,331.4 L280.2,331.4 L282.2,331.5 L284.2,331.5 L286.2,331.5 L288.2,331.5 L290.2,331.5 L292.2,331.5 L294.2,331.5 L296.2,331.4 L298.2,331.4 L300.2,331.4 L302.2,331.4 L304.2,331.4 L306.2,331.4 L308.2,331.4 L310.2,331.4 L312.2,331.4 L314.2,331.4 L316.2,331.4 L318.2,331.3 L320.2,331.3 L322.2,331.3 L324.2,331.3 L326.2,331.3 L328.2,331.3 L330.2,331.3 L332.2,331.3 L334.2,331.3 L336.2,331.3 L338.2,331.3 L340.2,331.2 L342.2,331.2 L344.2,331.2 L346.2,331.2 L348.2,331.2 L350.2,331.2 L352.2,331.2 L354.2,331.2 L356.2,331.2 L358.2,331.2 L360.2,331.1 L362.2,331.1 L364.2,331.1 L366.2,331.1 L368.2,331.1 L370.2,331.1 L372.2,331.1 L374.2,331.1 L376.2,331.1 L378.2,331.1 L380.2,331.1 L382.2,331.0 L384.2,331.0 L386.2,331.0 L388.2,331.0 L390.2,331.0 L392.2,330.9 L394.2,330.7 L396.2,330.5 L398.2,330.3 L400.2,330.1 L402.2,329.9 L404.2,329.7 L406.2,329.5 L408.2,329.3 L410.2,329.1 L412.2,328.5 L414.2,327.8 L416.2,327.0 L418.2,326.2 L420.2,325.5 L422.2,324.7 L424.2,323.9 L426.2,323.2 L428.2,322.4 L430.2,321.6 L432.2,320.9 L434.2,320.1 L436.2,319.3 L438.2,318.6 L440.2,317.8 L442.2,317.0 L442.3,317.0" fill="none" stroke="#858585" stroke-width="1"/>
<path d="M128.2,312.4 L130.2,314.3 L132.2,315.4 L134.2,316.5 L136.2,317.6 L138.2,318.7 L140.2,319.8 L142.2,320.8 L144.2,321.9 L146.2,323.0 L148.2,324.1 L150.2,325.2 L152.2,326.3 L154.2,326.9 L156.2,327.3 L158.2,327.6 L160.2,328.0 L162.2,328.3 L164.2,328.7 L166.2,329.0 L168.2,329.4 L170.2,329.7 L172.2,330.1 L174.2,330.3 L176.2,330.4 L178.2,330.5 L180.2,330.6 L182.2,330.7 L184.2,330.8 L186.2,330.9 L188.2,331.0 L190.2,331.1 L192.2,331.2 L194.2,331.3 L196.2,331.3 L198.2,331.4 L200.2,331.4 L202.2,331.5 L204.2,331.5 L206.2,331.6 L208.2,331.6 L210.2,331.6 L212.2,331.7 L214.2,331.7 L216.2,331.8 L218.2,331.8 L220.2,331.9 L222.2,331.9 L224.2,331.9 L226.2,332.0 L228.2,332.0 L230.2,332.1 L232.2,332.1 L234.2,332.1 L236.2,332.2 L238.2,332.2 L240.2,332.2 L242.2,332.3 L244.2,332.3 L246.2,332.3 L248.2,332.3 L250.2,332.4 L252.2,332.4 L254.2,332.4 L256.2,332.5 L258.2,332.5 L260.2,332.5 L262.2,332.6 L264.2,332.6 L266.2,332.6 L268.2,332.6 L270.2,332.7 L272.2,332.7 L274.2,332.7 L276.2,332.8 L278.2,332.8 L280.2,332.8 L282.2,332.9 L284.2,332.9 L286.2,332.9 L288.2,332.9 L290.2,332.9 L292.2,332.9 L294.2,332.9 L296.2,332.8 L298.2,332.8 L300.2,332.8 L302.2,332.8 L304.2,332.8 L306.2,332.8 L308.2,332.8 L310.2,332.8 L312.2,332.8 L314.2,332.8 L316.2,332.8 L318.2,332.7 L320.2,332.7 L322.2,332.7 L324.2,332.7 L326.2,332.7 L328.2,332.7 L330.2,332.7 L332.2,332.7 L334.2,332.7 L336.2,332.7 L338.2,332.7 L340.2,332.6 L342.2,332.6 L344.2,332.6 L346.2,332.6 L348.2,332.6 L350.2,332.6 L352.2,332.6 L354.2,332.6 L356.2,332.6 L358.2,332.6 L360.2,332.5 L362.2,332.5 L364.2,332.5 L366.2,332.5 L368.2,332.5 L370.2,332.5 L372.2,332.5 L374.2,332.5 L376.2,332.5 L378.2,332.5 L380.2,332.5 L382.2,332.4 L384.2,332.4 L386.2,332.4 L388.2,332.4 L390.2,332.4 L392.2,332.3 L394.2,332.1 L396.2,331.9 L398.2,331.7 L400.2,331.5 L402.2,331.3 L404.2,331.1 L406.2,330.9 L408.2,330.7 L410.2,330.5 L412.2,329.9 L414.2,329.2 L416.2,328.4 L418.2,327.6 L420.2,326.9 L422.2,326.1 L424.2,325.3 L426.2,324.6 L428.2,323.8 L430.2,323.0 L432.2,322.3 L434.2,321.5 L436.2,320.7 L438.2,320.0 L440.2,319.2 L442.2,318.4 L442.3,318.4" fill="none" stroke="#b2b2b2" stroke-width="1.3"/>
<path d="M128.2,353.8 L130.2,355.9 L132.2,358.0 L134.2,360.0 L136.2,362.0 L138.2,364.0 L140.2,365.9 L142.2,367.4 L144.2,368.8 L146.2,370.2 L148.2,371.7 L150.2,373.1 L152.2,374.5 L154.2,375.8 L156.2,376.3 L158.2,376.8 L160.2,377.2 L162.2,377.7 L164.2,378.1 L166.2,378.6 L168.2,379.0 L170.2,379.5 L172.2,379.9 L174.2,380.2 L176.2,380.4 L178.2,380.6 L180.2,380.8 L182.2,380.9 L184.2,381.1 L186.2,381.3 L188.2,381.5 L190.2,381.7 L192.2,381.8 L194.2,382.0 L196.2,382.1 L198.2,382.1 L200.2,382.2 L202.2,382.2 L204.2,382.3 L206.2,382.3 L208.2,382.4 L210.2,382.4 L212.2,382.5 L214.2,382.5 L216.2,382.6 L218.2,382.6 L220.2,382.7 L222.2,382.7 L224.2,382.8 L226.2,382.8 L228.2,382.9 L230.2,382.9 L232.2,383.0 L234.2,383.0 L236.2,383.1 L238.2,383.1 L240.2,383.2 L242.2,383.2 L244.2,383.3 L246.2,383.3 L248.2,383.4 L250.2,383.4 L252.2,383.5 L254.2,383.5 L256.2,383.6 L258.2,383.6 L260.2,383.7 L262.2,383.7 L264.2,383.8 L266.2,383.8 L268.2,383.9 L270.2,383.9 L272.2,384.0 L274.2,384.0 L276.2,384.1 L278.2,384.1 L280.2,384.2 L282.2,384.2 L284.2,384.3 L286.2,384.3 L288.2,384.3 L290.2,384.3 L292.2,384.3 L294.2,384.3 L296.2,384.3 L298.2,384.3 L300.2,384.4 L302.2,384.4 L304.2,384.4 L306.2,384.4 L308.2,384.4 L310.2,384.4 L312.2,384.4 L314.2,384.4 L316.2,384.4 L318.2,384.4 L320.2,384.4 L322.2,384.4 L324.2,384.4 L326.2,384.5 L328.2,384.5 L330.2,384.5 L332.2,384.5 L334.2,384.5 L336.2,384.5 L338.2,384.5 L340.2,384.5 L342.2,384.5 L344.2,384.5 L346.2,384.5 L348.2,384.5 L350.2,384.5 L352.2,384.6 L354.2,384.6 L356.2,384.6 L358.2,384.6 L360.2,384.6 L362.2,384.6 L364.2,384.6 L366.2,384.6 L368.2,384.6 L370.2,384.6 L372.2,384.6 L374.2,384.6 L376.2,384.6 L378.2,384.6 L380.2,384.7 L382.2,384.7 L384.2,384.7 L386.2,384.7 L388.2,384.7 L390.2,384.7 L392.2,384.6 L394.2,384.1 L396.2,383.7 L398.2,383.2 L400.2,382.7 L402.2,382.3 L404.2,381.8 L406.2,381.3 L408.2,380.9 L410.2,380.4 L412.2,379.5 L414.2,378.4 L416.2,377.4 L418.2,376.3 L420.2,375.2 L422.2,374.1 L424.2,373.0 L426.2,371.9 L428.2,370.8 L430.2,369.7 L432.2,368.2 L434.2,366.7 L436.2,365.3 L438.2,363.8 L440.2,362.3 L442.2,360.9 L442.3,360.8" fill="none" stroke="#7e7e7e" stroke-width="1.4"/>
<line x1="153.0" y1="325.8" x2="153.0" y2="345.6" stroke="#363636" stroke-width="1.7"/>
<line x1="173.0" y1="329.3" x2="173.0" y2="350.2" stroke="#363636" stroke-width="1.7"/>
<line x1="193.8" y1="330.4" x2="193.8" y2="351.5" stroke="#363636" stroke-width="1.7"/>
<line x1="213.5" y1="330.8" x2="213.5" y2="351.9" stroke="#363636" stroke-width="1.7"/>
<line x1="233.8" y1="331.2" x2="233.8" y2="352.3" stroke="#363636" stroke-width="1.7"/>
<line x1="273.0" y1="331.8" x2="273.0" y2="353.1" stroke="#363636" stroke-width="1.7"/>
<line x1="292.5" y1="332.0" x2="292.5" y2="353.4" stroke="#363636" stroke-width="1.7"/>
<line x1="333.0" y1="331.8" x2="333.0" y2="353.7" stroke="#363636" stroke-width="1.7"/>
<line x1="353.0" y1="331.7" x2="353.0" y2="353.9" stroke="#363636" stroke-width="1.7"/>
<line x1="372.5" y1="331.6" x2="372.5" y2="354.0" stroke="#363636" stroke-width="1.7"/>
<line x1="393.0" y1="331.4" x2="393.0" y2="354.0" stroke="#363636" stroke-width="1.7"/>
<line x1="411.7" y1="329.2" x2="411.7" y2="350.1" stroke="#363636" stroke-width="1.7"/>
<line x1="154.3" y1="347.3" x2="154.3" y2="363.5" stroke="#363636" stroke-width="1.7"/>
<line x1="173.0" y1="351.2" x2="173.0" y2="366.5" stroke="#363636" stroke-width="1.7"/>
<line x1="193.8" y1="352.5" x2="193.8" y2="368.3" stroke="#363636" stroke-width="1.7"/>
<line x1="253.0" y1="353.7" x2="253.0" y2="369.3" stroke="#363636" stroke-width="1.7"/>
<line x1="311.7" y1="354.5" x2="311.7" y2="369.7" stroke="#363636" stroke-width="1.7"/>
<line x1="332.5" y1="354.7" x2="332.5" y2="369.6" stroke="#363636" stroke-width="1.7"/>
<line x1="371.7" y1="355.0" x2="371.7" y2="369.5" stroke="#363636" stroke-width="1.7"/>
<line x1="394.0" y1="354.8" x2="394.0" y2="368.8" stroke="#363636" stroke-width="1.7"/>
<line x1="413.0" y1="350.5" x2="413.0" y2="363.0" stroke="#363636" stroke-width="1.7"/>
<line x1="154.0" y1="364.5" x2="154.0" y2="376.5" stroke="#363636" stroke-width="1.7"/>
<line x1="173.0" y1="367.5" x2="173.0" y2="380.8" stroke="#363636" stroke-width="1.7"/>
<line x1="193.8" y1="369.3" x2="193.8" y2="382.7" stroke="#363636" stroke-width="1.7"/>
<line x1="213.5" y1="369.6" x2="213.5" y2="383.2" stroke="#363636" stroke-width="1.7"/>
<line x1="233.8" y1="370.0" x2="233.8" y2="383.7" stroke="#363636" stroke-width="1.7"/>
<line x1="273.0" y1="370.6" x2="273.0" y2="384.7" stroke="#363636" stroke-width="1.7"/>
<line x1="292.5" y1="370.8" x2="292.5" y2="385.0" stroke="#363636" stroke-width="1.7"/>
<line x1="331.7" y1="370.6" x2="331.7" y2="385.2" stroke="#363636" stroke-width="1.7"/>
<line x1="351.7" y1="370.5" x2="351.7" y2="385.3" stroke="#363636" stroke-width="1.7"/>
<line x1="371.7" y1="370.5" x2="371.7" y2="385.3" stroke="#363636" stroke-width="1.7"/>
<line x1="391.7" y1="370.4" x2="391.7" y2="385.4" stroke="#363636" stroke-width="1.7"/>
<line x1="411.7" y1="364.7" x2="411.7" y2="380.5" stroke="#363636" stroke-width="1.7"/>
<line x1="153.0" y1="321.0" x2="153.0" y2="325.3" stroke="#5a5a5a" stroke-width="1.2"/>
<line x1="173.0" y1="326.0" x2="173.0" y2="328.8" stroke="#5a5a5a" stroke-width="1.2"/>
<line x1="193.8" y1="327.0" x2="193.8" y2="329.9" stroke="#5a5a5a" stroke-width="1.2"/>
<line x1="213.5" y1="327.3" x2="213.5" y2="330.3" stroke="#5a5a5a" stroke-width="1.2"/>
<line x1="233.8" y1="327.7" x2="233.8" y2="330.7" stroke="#5a5a5a" stroke-width="1.2"/>
<line x1="273.0" y1="328.3" x2="273.0" y2="331.3" stroke="#5a5a5a" stroke-width="1.2"/>
<line x1="292.5" y1="328.4" x2="292.5" y2="331.5" stroke="#5a5a5a" stroke-width="1.2"/>
<line x1="333.0" y1="328.1" x2="333.0" y2="331.3" stroke="#5a5a5a" stroke-width="1.2"/>
<line x1="353.0" y1="327.9" x2="353.0" y2="331.2" stroke="#5a5a5a" stroke-width="1.2"/>
<line x1="372.5" y1="327.7" x2="372.5" y2="331.1" stroke="#5a5a5a" stroke-width="1.2"/>
<line x1="393.0" y1="327.1" x2="393.0" y2="330.9" stroke="#5a5a5a" stroke-width="1.2"/>
<line x1="411.7" y1="321.2" x2="411.7" y2="328.7" stroke="#5a5a5a" stroke-width="1.2"/>
</g>
<!-- CONES -->
<path d="M140.30,242.00 C140.30,240.55 141.05,238.97 142.00,237.80 C142.95,236.63 144.25,235.88 146.00,235.00 C147.75,234.12 149.33,233.87 152.50,232.50 C155.67,231.13 160.92,228.55 165.00,226.80 C169.08,225.05 172.83,223.43 177.00,222.00 C181.17,220.57 185.67,219.40 190.00,218.20 C194.33,217.00 198.92,215.88 203.00,214.80 C207.08,213.72 211.58,210.50 214.50,211.70 C217.42,212.90 218.58,217.87 220.50,222.00 C222.42,226.13 225.17,232.67 226.00,236.50 C226.83,240.33 226.17,241.42 225.50,245.00 C224.83,248.58 223.42,253.28 222.00,258.00 C220.58,262.72 220.17,271.30 217.00,273.30 C213.83,275.30 207.50,271.13 203.00,270.00 C198.50,268.87 194.33,267.83 190.00,266.50 C185.67,265.17 181.17,263.62 177.00,262.00 C172.83,260.38 169.08,258.63 165.00,256.80 C160.92,254.97 155.67,252.38 152.50,251.00 C149.33,249.62 147.75,249.25 146.00,248.50 C144.25,247.75 142.95,247.58 142.00,246.50 C141.05,245.42 140.30,243.45 140.30,242.00 Z" fill="url(#gConeL)"/>
<path d="M140.30,242.00 C140.30,240.55 141.05,238.97 142.00,237.80 C142.95,236.63 144.25,235.88 146.00,235.00 C147.75,234.12 149.33,233.87 152.50,232.50 C155.67,231.13 160.92,228.55 165.00,226.80 C169.08,225.05 172.83,223.43 177.00,222.00 C181.17,220.57 185.67,219.40 190.00,218.20 C194.33,217.00 198.92,215.88 203.00,214.80 C207.08,213.72 211.58,210.50 214.50,211.70 C217.42,212.90 218.58,217.87 220.50,222.00 C222.42,226.13 225.17,232.67 226.00,236.50 C226.83,240.33 226.17,241.42 225.50,245.00 C224.83,248.58 223.42,253.28 222.00,258.00 C220.58,262.72 220.17,271.30 217.00,273.30 C213.83,275.30 207.50,271.13 203.00,270.00 C198.50,268.87 194.33,267.83 190.00,266.50 C185.67,265.17 181.17,263.62 177.00,262.00 C172.83,260.38 169.08,258.63 165.00,256.80 C160.92,254.97 155.67,252.38 152.50,251.00 C149.33,249.62 147.75,249.25 146.00,248.50 C144.25,247.75 142.95,247.58 142.00,246.50 C141.05,245.42 140.30,243.45 140.30,242.00 Z" fill="url(#gShadeV)"/>
<path d="M140.30,242.00 C140.30,240.55 141.05,238.97 142.00,237.80 C142.95,236.63 144.25,235.88 146.00,235.00 C147.75,234.12 149.33,233.87 152.50,232.50 C155.67,231.13 160.92,228.55 165.00,226.80 C169.08,225.05 172.83,223.43 177.00,222.00 C181.17,220.57 185.67,219.40 190.00,218.20 C194.33,217.00 198.92,215.88 203.00,214.80 C207.08,213.72 211.58,210.50 214.50,211.70 C217.42,212.90 218.58,217.87 220.50,222.00 C222.42,226.13 225.17,232.67 226.00,236.50 C226.83,240.33 226.17,241.42 225.50,245.00 C224.83,248.58 223.42,253.28 222.00,258.00 C220.58,262.72 220.17,271.30 217.00,273.30 C213.83,275.30 207.50,271.13 203.00,270.00 C198.50,268.87 194.33,267.83 190.00,266.50 C185.67,265.17 181.17,263.62 177.00,262.00 C172.83,260.38 169.08,258.63 165.00,256.80 C160.92,254.97 155.67,252.38 152.50,251.00 C149.33,249.62 147.75,249.25 146.00,248.50 C144.25,247.75 142.95,247.58 142.00,246.50 C141.05,245.42 140.30,243.45 140.30,242.00 Z" fill="url(#gShadeR)"/>
<path d="M141,239 C150,234 165,227 177,222 C190,218 203,214.8 214.5,211.7" fill="none" stroke="#484848" stroke-width="1"/>
<path d="M214.5,211.7 L219.5,219.5 L221.5,218.5 L216.5,211 Z" fill="#2e2e2e"/>
<path d="M225.6,249 C224.5,256 222,264 216,273.3 L218.5,272.5 C223,265 226,257 227.2,249 Z" fill="#2e2e2e"/>
<path d="M344.70,211.20 C347.73,210.83 353.68,213.23 358.20,214.80 C362.72,216.37 367.18,218.70 371.80,220.60 C376.42,222.50 381.20,224.02 385.90,226.20 C390.60,228.38 396.18,231.60 400.00,233.70 C403.82,235.80 406.22,237.17 408.80,238.80 C411.38,240.43 413.93,242.13 415.50,243.50 C417.07,244.87 418.28,245.88 418.20,247.00 C418.12,248.12 417.12,248.93 415.00,250.20 C412.88,251.47 409.17,252.87 405.50,254.60 C401.83,256.33 397.05,258.67 393.00,260.60 C388.95,262.53 386.28,264.03 381.20,266.20 C376.12,268.37 368.58,271.52 362.50,273.60 C356.42,275.68 348.45,279.30 344.70,278.70 C340.95,278.10 341.37,273.45 340.00,270.00 C338.63,266.55 337.43,262.80 336.50,258.00 C335.57,253.20 334.40,246.50 334.40,241.20 C334.40,235.90 335.57,230.23 336.50,226.20 C337.43,222.17 338.63,219.50 340.00,217.00 C341.37,214.50 341.67,211.57 344.70,211.20 Z" fill="url(#gConeR)" stroke="#505050" stroke-width="0.6"/>
<path d="M344.70,211.20 C347.73,210.83 353.68,213.23 358.20,214.80 C362.72,216.37 367.18,218.70 371.80,220.60 C376.42,222.50 381.20,224.02 385.90,226.20 C390.60,228.38 396.18,231.60 400.00,233.70 C403.82,235.80 406.22,237.17 408.80,238.80 C411.38,240.43 413.93,242.13 415.50,243.50 C417.07,244.87 418.28,245.88 418.20,247.00 C418.12,248.12 417.12,248.93 415.00,250.20 C412.88,251.47 409.17,252.87 405.50,254.60 C401.83,256.33 397.05,258.67 393.00,260.60 C388.95,262.53 386.28,264.03 381.20,266.20 C376.12,268.37 368.58,271.52 362.50,273.60 C356.42,275.68 348.45,279.30 344.70,278.70 C340.95,278.10 341.37,273.45 340.00,270.00 C338.63,266.55 337.43,262.80 336.50,258.00 C335.57,253.20 334.40,246.50 334.40,241.20 C334.40,235.90 335.57,230.23 336.50,226.20 C337.43,222.17 338.63,219.50 340.00,217.00 C341.37,214.50 341.67,211.57 344.70,211.20 Z" fill="url(#gShadeV)"/>
<path d="M344.70,211.20 C343.28,211.95 341.37,214.50 340.00,217.00 C338.63,219.50 337.43,222.17 336.50,226.20 C335.57,230.23 334.40,235.90 334.40,241.20 C334.40,246.50 335.57,253.20 336.50,258.00 C337.43,262.80 338.63,266.55 340.00,270.00 C341.37,273.45 343.37,277.70 344.70,278.70 C346.03,279.70 347.95,278.12 348.00,276.00 C348.05,273.88 345.92,269.67 345.00,266.00 C344.08,262.33 343.03,258.17 342.50,254.00 C341.97,249.83 341.72,245.33 341.80,241.00 C341.88,236.67 342.38,231.67 343.00,228.00 C343.62,224.33 344.58,221.58 345.50,219.00 C346.42,216.42 348.63,213.80 348.50,212.50 C348.37,211.20 346.12,210.45 344.70,211.20 Z" fill="url(#gEndR)"/>
<path d="M344.70,211.20 C343.78,211.95 341.37,214.50 340.00,217.00 C338.63,219.50 337.43,222.17 336.50,226.20 C335.57,230.23 334.40,235.90 334.40,241.20 C334.40,246.50 335.57,253.20 336.50,258.00 C337.43,262.80 338.63,266.55 340.00,270.00 C341.37,273.45 343.78,277.70 344.70,278.70 C345.62,279.70 346.03,278.12 345.50,276.00 C344.97,273.88 342.67,269.67 341.50,266.00 C340.33,262.33 339.12,258.17 338.50,254.00 C337.88,249.83 337.72,245.33 337.80,241.00 C337.88,236.67 338.38,231.67 339.00,228.00 C339.62,224.33 340.42,221.58 341.50,219.00 C342.58,216.42 344.97,213.80 345.50,212.50 C346.03,211.20 345.62,210.45 344.70,211.20 Z" fill="#3a3a3a" opacity="0.8"/>
<path d="M344.7,211.2 C358,214.5 372,220 386,226 C396,230.5 405,235.5 412,240" fill="none" stroke="#444" stroke-width="1.2"/>
<!-- DISCS -->
<polygon points="226,241.7 336,242.7 336,248.7 226,247.7" fill="#000" opacity="0.13"/>
<rect x="274" y="239.5" width="5" height="9" rx="1.5" fill="#a0a0a0"/>
<g id="discs">
<ellipse cx="242.5" cy="243.6" rx="4.2" ry="26.9" fill="url(#gDisc)" transform="rotate(5.9 242.5 243.6)"/>
<ellipse cx="255.2" cy="243.5" rx="4.4" ry="26.8" fill="url(#gDisc)" transform="rotate(0.9 255.2 243.5)"/>
<ellipse cx="267.9" cy="243.5" rx="4.1" ry="26.8" fill="url(#gDisc)" transform="rotate(0.9 267.9 243.5)"/>
<ellipse cx="282.6" cy="244" rx="4.4" ry="26.5" fill="url(#gDisc)" transform="rotate(8.7 282.6 244)"/>
<ellipse cx="300.4" cy="244.5" rx="4.8" ry="27" fill="url(#gDisc)" transform="rotate(-9.4 300.4 244.5)"/>
<ellipse cx="319.5" cy="244.5" rx="4.4" ry="27" fill="url(#gDisc)" transform="rotate(9.5 319.5 244.5)"/>
</g>

</svg>

<div class="txt" style="left:251.5px;top:435.5px;font-size:8.6px;font-weight:bold;">Isolate : persp</div>
<div id="bot"><div class="l1"></div><div class="l2"></div>
<div style="position:absolute;left:409px;top:5px;width:1px;height:26px;background:#333;"></div>
<div style="position:absolute;left:413px;top:7px;width:1px;height:1px;background:#7a7a7a;"></div><div style="position:absolute;left:413px;top:10px;width:1px;height:1px;background:#7a7a7a;"></div><div style="position:absolute;left:413px;top:13px;width:1px;height:1px;background:#7a7a7a;"></div><div style="position:absolute;left:413px;top:16px;width:1px;height:1px;background:#7a7a7a;"></div><div style="position:absolute;left:413px;top:19px;width:1px;height:1px;background:#7a7a7a;"></div><div style="position:absolute;left:413px;top:22px;width:1px;height:1px;background:#7a7a7a;"></div><div style="position:absolute;left:413px;top:25px;width:1px;height:1px;background:#7a7a7a;"></div><div style="position:absolute;left:413px;top:28px;width:1px;height:1px;background:#7a7a7a;"></div><div style="position:absolute;left:416px;top:7px;width:1px;height:1px;background:#7a7a7a;"></div><div style="position:absolute;left:416px;top:10px;width:1px;height:1px;background:#7a7a7a;"></div><div style="position:absolute;left:416px;top:13px;width:1px;height:1px;background:#7a7a7a;"></div><div style="position:absolute;left:416px;top:16px;width:1px;height:1px;background:#7a7a7a;"></div><div style="position:absolute;left:416px;top:19px;width:1px;height:1px;background:#7a7a7a;"></div><div style="position:absolute;left:416px;top:22px;width:1px;height:1px;background:#7a7a7a;"></div><div style="position:absolute;left:416px;top:25px;width:1px;height:1px;background:#7a7a7a;"></div><div style="position:absolute;left:416px;top:28px;width:1px;height:1px;background:#7a7a7a;"></div><div style="position:absolute;left:589px;top:13px;width:1px;height:1px;background:#7a7a7a;"></div><div style="position:absolute;left:589px;top:16px;width:1px;height:1px;background:#7a7a7a;"></div><div style="position:absolute;left:589px;top:19px;width:1px;height:1px;background:#7a7a7a;"></div><div style="position:absolute;left:589px;top:22px;width:1px;height:1px;background:#7a7a7a;"></div>
<div class="txt" style="left:430.5px;top:13px;font-size:9.4px;color:#e0e0e0;">MEL</div>
<div style="position:absolute;left:460px;top:9px;width:125px;height:18px;background:#2b2b2b;border-radius:2px;"></div>
<div style="position:absolute;left:592px;top:9px;width:8px;height:22px;background:#2b2b2b;"></div>
</div>
</body></html>
